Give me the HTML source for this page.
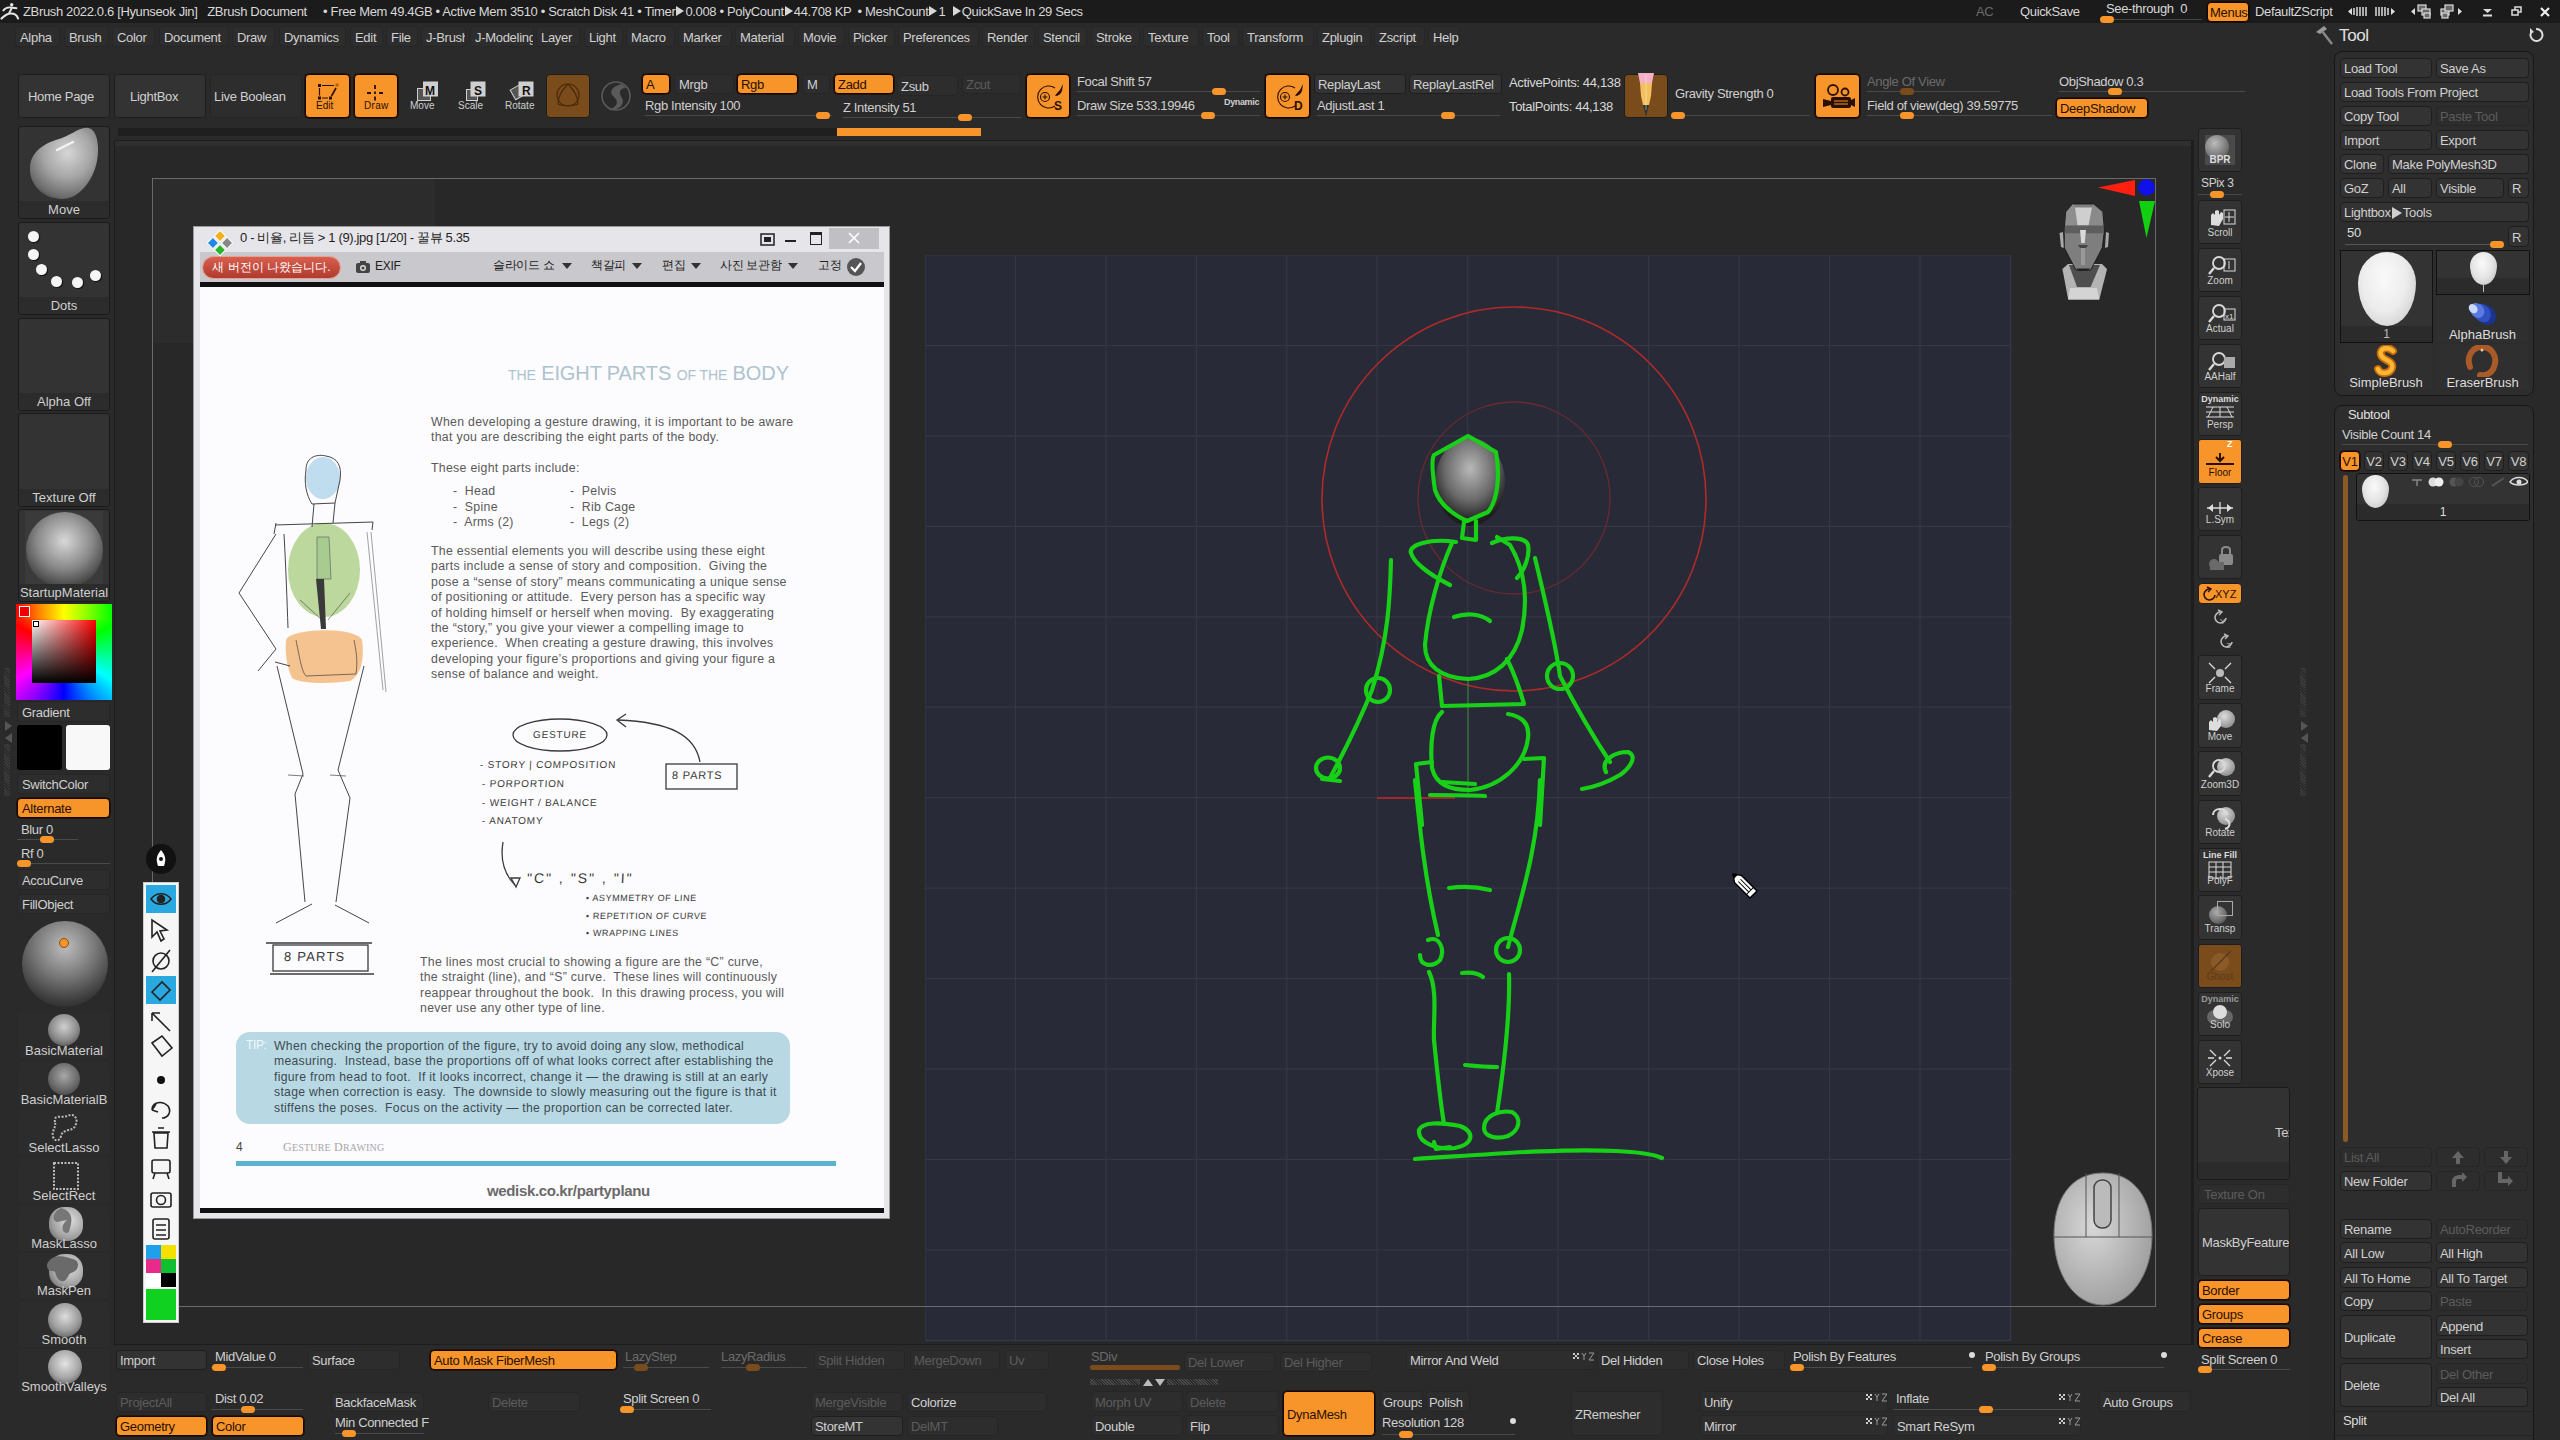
<!DOCTYPE html><html><head><meta charset="utf-8"><style>
html,body{margin:0;padding:0;width:2560px;height:1440px;overflow:hidden;background:#2a2a2a;font-family:"Liberation Sans",sans-serif;}
div{position:absolute;box-sizing:content-box;}
.t{white-space:nowrap;line-height:1.15;letter-spacing:-0.35px;}
.b{display:flex;align-items:center;white-space:nowrap;overflow:hidden;border-radius:4px;box-sizing:border-box;padding-top:1px;letter-spacing:-0.3px;}
svg{position:absolute;}
</style></head><body>
<div style="left:0px;top:0px;width:2560px;height:23px;background:#1b1b1b;"></div>
<div class="t" style="left:23px;top:5px;font-size:13px;color:#d8d8d8;">ZBrush 2022.0.6 [Hyunseok Jin]&nbsp;&nbsp; ZBrush Document &nbsp;&nbsp;&nbsp;&nbsp;&bull; Free Mem 49.4GB &bull; Active Mem 3510 &bull; Scratch Disk 41 &bull; Timer<span style="display:inline-block;width:0;height:0;border-left:8px solid #d8d8d8;border-top:5px solid transparent;border-bottom:5px solid transparent;margin:0 1px"></span>0.008 &bull; PolyCount<span style="display:inline-block;width:0;height:0;border-left:8px solid #d8d8d8;border-top:5px solid transparent;border-bottom:5px solid transparent;margin:0 1px"></span>44.708 KP &nbsp;&bull; MeshCount<span style="display:inline-block;width:0;height:0;border-left:8px solid #d8d8d8;border-top:5px solid transparent;border-bottom:5px solid transparent;margin:0 1px"></span>1 &nbsp;<span style="display:inline-block;width:0;height:0;border-left:8px solid #d8d8d8;border-top:5px solid transparent;border-bottom:5px solid transparent;margin:0 1px"></span>QuickSave In 29 Secs</div>
<div class="b" style="left:15px;top:26px;width:45px;height:21px;background:#2d2d2d;border:1px solid #262626;color:#d0d0d0;font-size:13px;justify-content:flex-start;padding-left:4px;">Alpha</div>
<div class="b" style="left:64px;top:26px;width:45px;height:21px;background:#2d2d2d;border:1px solid #262626;color:#d0d0d0;font-size:13px;justify-content:flex-start;padding-left:4px;">Brush</div>
<div class="b" style="left:112px;top:26px;width:43px;height:21px;background:#2d2d2d;border:1px solid #262626;color:#d0d0d0;font-size:13px;justify-content:flex-start;padding-left:4px;">Color</div>
<div class="b" style="left:159px;top:26px;width:70px;height:21px;background:#2d2d2d;border:1px solid #262626;color:#d0d0d0;font-size:13px;justify-content:flex-start;padding-left:4px;">Document</div>
<div class="b" style="left:232px;top:26px;width:43px;height:21px;background:#2d2d2d;border:1px solid #262626;color:#d0d0d0;font-size:13px;justify-content:flex-start;padding-left:4px;">Draw</div>
<div class="b" style="left:279px;top:26px;width:67px;height:21px;background:#2d2d2d;border:1px solid #262626;color:#d0d0d0;font-size:13px;justify-content:flex-start;padding-left:4px;">Dynamics</div>
<div class="b" style="left:350px;top:26px;width:33px;height:21px;background:#2d2d2d;border:1px solid #262626;color:#d0d0d0;font-size:13px;justify-content:flex-start;padding-left:4px;">Edit</div>
<div class="b" style="left:386px;top:26px;width:32px;height:21px;background:#2d2d2d;border:1px solid #262626;color:#d0d0d0;font-size:13px;justify-content:flex-start;padding-left:4px;">File</div>
<div class="b" style="left:421px;top:26px;width:45px;height:21px;background:#2d2d2d;border:1px solid #262626;color:#d0d0d0;font-size:13px;justify-content:flex-start;padding-left:4px;">J-Brush</div>
<div class="b" style="left:470px;top:26px;width:64px;height:21px;background:#2d2d2d;border:1px solid #262626;color:#d0d0d0;font-size:13px;justify-content:flex-start;padding-left:4px;">J-Modeling</div>
<div class="b" style="left:536px;top:26px;width:44px;height:21px;background:#2d2d2d;border:1px solid #262626;color:#d0d0d0;font-size:13px;justify-content:flex-start;padding-left:4px;">Layer</div>
<div class="b" style="left:584px;top:26px;width:39px;height:21px;background:#2d2d2d;border:1px solid #262626;color:#d0d0d0;font-size:13px;justify-content:flex-start;padding-left:4px;">Light</div>
<div class="b" style="left:626px;top:26px;width:49px;height:21px;background:#2d2d2d;border:1px solid #262626;color:#d0d0d0;font-size:13px;justify-content:flex-start;padding-left:4px;">Macro</div>
<div class="b" style="left:678px;top:26px;width:54px;height:21px;background:#2d2d2d;border:1px solid #262626;color:#d0d0d0;font-size:13px;justify-content:flex-start;padding-left:4px;">Marker</div>
<div class="b" style="left:735px;top:26px;width:60px;height:21px;background:#2d2d2d;border:1px solid #262626;color:#d0d0d0;font-size:13px;justify-content:flex-start;padding-left:4px;">Material</div>
<div class="b" style="left:798px;top:26px;width:47px;height:21px;background:#2d2d2d;border:1px solid #262626;color:#d0d0d0;font-size:13px;justify-content:flex-start;padding-left:4px;">Movie</div>
<div class="b" style="left:848px;top:26px;width:47px;height:21px;background:#2d2d2d;border:1px solid #262626;color:#d0d0d0;font-size:13px;justify-content:flex-start;padding-left:4px;">Picker</div>
<div class="b" style="left:898px;top:26px;width:81px;height:21px;background:#2d2d2d;border:1px solid #262626;color:#d0d0d0;font-size:13px;justify-content:flex-start;padding-left:4px;">Preferences</div>
<div class="b" style="left:982px;top:26px;width:53px;height:21px;background:#2d2d2d;border:1px solid #262626;color:#d0d0d0;font-size:13px;justify-content:flex-start;padding-left:4px;">Render</div>
<div class="b" style="left:1038px;top:26px;width:49px;height:21px;background:#2d2d2d;border:1px solid #262626;color:#d0d0d0;font-size:13px;justify-content:flex-start;padding-left:4px;">Stencil</div>
<div class="b" style="left:1091px;top:26px;width:49px;height:21px;background:#2d2d2d;border:1px solid #262626;color:#d0d0d0;font-size:13px;justify-content:flex-start;padding-left:4px;">Stroke</div>
<div class="b" style="left:1143px;top:26px;width:56px;height:21px;background:#2d2d2d;border:1px solid #262626;color:#d0d0d0;font-size:13px;justify-content:flex-start;padding-left:4px;">Texture</div>
<div class="b" style="left:1202px;top:26px;width:37px;height:21px;background:#2d2d2d;border:1px solid #262626;color:#d0d0d0;font-size:13px;justify-content:flex-start;padding-left:4px;">Tool</div>
<div class="b" style="left:1242px;top:26px;width:72px;height:21px;background:#2d2d2d;border:1px solid #262626;color:#d0d0d0;font-size:13px;justify-content:flex-start;padding-left:4px;">Transform</div>
<div class="b" style="left:1317px;top:26px;width:54px;height:21px;background:#2d2d2d;border:1px solid #262626;color:#d0d0d0;font-size:13px;justify-content:flex-start;padding-left:4px;">Zplugin</div>
<div class="b" style="left:1374px;top:26px;width:51px;height:21px;background:#2d2d2d;border:1px solid #262626;color:#d0d0d0;font-size:13px;justify-content:flex-start;padding-left:4px;">Zscript</div>
<div class="b" style="left:1428px;top:26px;width:32px;height:21px;background:#2d2d2d;border:1px solid #262626;color:#d0d0d0;font-size:13px;justify-content:flex-start;padding-left:4px;">Help</div>
<div class="t" style="left:1976px;top:5px;font-size:13px;color:#6a6a6a;">AC</div>
<div class="t" style="left:2020px;top:5px;font-size:13px;color:#d8d8d8;">QuickSave</div>
<div class="t" style="left:2106px;top:2px;font-size:13px;color:#d8d8d8;">See-through&nbsp; 0</div>
<div style="left:2100px;top:19px;width:102px;height:1px;background:#444;"></div>
<div style="left:2100px;top:16px;width:14px;height:7px;border-radius:4px;background:#f8952a"></div>
<div class="b" style="left:2207px;top:2px;width:42px;height:20px;background:#f8952a;border:1px solid #160600;color:#2a0f00;font-size:13px;justify-content:flex-start;padding-left:2px;box-shadow:0 0 0 0.6px #160600;">Menus</div>
<div class="t" style="left:2255px;top:5px;font-size:13px;color:#d8d8d8;">DefaultZScript</div>
<div class="b" style="left:18px;top:74px;width:92px;height:44px;background:#333333;border:1px solid #1e1e1e;color:#d0d0d0;font-size:13px;justify-content:flex-start;padding-left:9px;">Home Page</div>
<div class="b" style="left:114px;top:74px;width:92px;height:44px;background:#333333;border:1px solid #1e1e1e;color:#d0d0d0;font-size:13px;justify-content:flex-start;padding-left:15px;">LightBox</div>
<div class="b" style="left:210px;top:74px;width:92px;height:44px;background:#2d2d2d;border:1px solid #262626;color:#d0d0d0;font-size:13px;justify-content:flex-start;padding-left:3px;">Live Boolean</div>
<div class="b" style="left:305px;top:74px;width:45px;height:44px;background:#f8952a;border:1px solid #160600;color:#2a0f00;font-size:13px;justify-content:flex-start;padding-left:4px;box-shadow:0 0 0 0.6px #160600;"></div>
<div class="b" style="left:354px;top:74px;width:44px;height:44px;background:#f8952a;border:1px solid #160600;color:#2a0f00;font-size:13px;justify-content:flex-start;padding-left:4px;box-shadow:0 0 0 0.6px #160600;"></div>
<div class="t" style="left:316px;top:100px;font-size:10px;color:#2a0f00;letter-spacing:0;">Edit</div>
<div class="t" style="left:364px;top:100px;font-size:10px;color:#2a0f00;letter-spacing:0.3px;">Draw</div>
<div class="t" style="left:410px;top:100px;font-size:10px;color:#cfcfcf;letter-spacing:0;">Move</div>
<div class="t" style="left:458px;top:100px;font-size:10px;color:#cfcfcf;letter-spacing:0;">Scale</div>
<div class="t" style="left:505px;top:100px;font-size:10px;color:#cfcfcf;letter-spacing:0;">Rotate</div>
<div class="b" style="left:546px;top:74px;width:44px;height:44px;background:#333333;border:1px solid #1e1e1e;color:#d0d0d0;font-size:13px;justify-content:flex-start;padding-left:4px;background:#7a4c1c;border-color:#1e1e1e;"></div>
<div class="b" style="left:642px;top:74px;width:28px;height:20px;background:#f8952a;border:1px solid #160600;color:#2a0f00;font-size:13px;justify-content:flex-start;padding-left:3px;box-shadow:0 0 0 0.6px #160600;">A</div>
<div class="b" style="left:674px;top:74px;width:60px;height:20px;background:#2d2d2d;border:1px solid #262626;color:#d0d0d0;font-size:13px;justify-content:flex-start;padding-left:4px;">Mrgb</div>
<div class="b" style="left:737px;top:74px;width:61px;height:20px;background:#f8952a;border:1px solid #160600;color:#2a0f00;font-size:13px;justify-content:flex-start;padding-left:3px;box-shadow:0 0 0 0.6px #160600;">Rgb</div>
<div class="b" style="left:802px;top:74px;width:28px;height:20px;background:#2d2d2d;border:1px solid #262626;color:#d0d0d0;font-size:13px;justify-content:flex-start;padding-left:4px;">M</div>
<div class="b" style="left:834px;top:74px;width:60px;height:20px;background:#f8952a;border:1px solid #160600;color:#2a0f00;font-size:13px;justify-content:flex-start;padding-left:3px;box-shadow:0 0 0 0.6px #160600;">Zadd</div>
<div class="b" style="left:897px;top:75px;width:61px;height:21px;background:#2d2d2d;border:1px solid #262626;color:#d0d0d0;font-size:13px;justify-content:flex-start;padding-left:3px;">Zsub</div>
<div class="b" style="left:962px;top:74px;width:59px;height:20px;background:#2d2d2d;border:1px solid #262626;color:#5c5c5c;font-size:13px;justify-content:flex-start;padding-left:3px;">Zcut</div>
<div class="t" style="left:645px;top:99px;font-size:13px;color:#d0d0d0;">Rgb Intensity 100</div>
<div style="left:645px;top:115px;width:187px;height:1px;background:#4a4a4a;"></div>
<div style="left:816px;top:112px;width:14px;height:7px;border-radius:4px;background:#f8952a"></div>
<div class="t" style="left:843px;top:101px;font-size:13px;color:#d0d0d0;">Z Intensity 51</div>
<div style="left:843px;top:117px;width:178px;height:1px;background:#4a4a4a;"></div>
<div style="left:958px;top:114px;width:14px;height:7px;border-radius:4px;background:#f8952a"></div>
<div style="left:837px;top:128px;width:144px;height:8px;background:#f8952a;"></div>
<div class="b" style="left:1026px;top:74px;width:44px;height:44px;background:#f8952a;border:1px solid #160600;color:#2a0f00;font-size:13px;justify-content:flex-start;padding-left:4px;box-shadow:0 0 0 0.6px #160600;"></div>
<div class="t" style="left:1077px;top:75px;font-size:13px;color:#d0d0d0;">Focal Shift 57</div>
<div style="left:1077px;top:91px;width:183px;height:1px;background:#4a4a4a;"></div>
<div style="left:1212px;top:88px;width:14px;height:7px;border-radius:4px;background:#f8952a"></div>
<div class="t" style="left:1077px;top:99px;font-size:13px;color:#d0d0d0;">Draw Size 533.19946</div>
<div style="left:1077px;top:115px;width:183px;height:1px;background:#4a4a4a;"></div>
<div style="left:1201px;top:112px;width:14px;height:7px;border-radius:4px;background:#f8952a"></div>
<div class="t" style="left:1224px;top:97px;font-size:9px;color:#cfcfcf;font-weight:bold;">Dynamic</div>
<div class="b" style="left:1265px;top:74px;width:45px;height:44px;background:#f8952a;border:1px solid #160600;color:#2a0f00;font-size:13px;justify-content:flex-start;padding-left:4px;box-shadow:0 0 0 0.6px #160600;"></div>
<div class="b" style="left:1314px;top:74px;width:92px;height:20px;background:#333333;border:1px solid #1e1e1e;color:#d0d0d0;font-size:13px;justify-content:flex-start;padding-left:3px;">ReplayLast</div>
<div class="b" style="left:1409px;top:74px;width:93px;height:20px;background:#333333;border:1px solid #1e1e1e;color:#d0d0d0;font-size:13px;justify-content:flex-start;padding-left:3px;">ReplayLastRel</div>
<div class="t" style="left:1317px;top:99px;font-size:13px;color:#d0d0d0;">AdjustLast 1</div>
<div style="left:1317px;top:115px;width:183px;height:1px;background:#4a4a4a;"></div>
<div style="left:1441px;top:112px;width:14px;height:7px;border-radius:4px;background:#f8952a"></div>
<div class="t" style="left:1509px;top:76px;font-size:13px;color:#d8d8d8;">ActivePoints: 44,138</div>
<div class="t" style="left:1509px;top:100px;font-size:13px;color:#d8d8d8;">TotalPoints: 44,138</div>
<div class="b" style="left:1624px;top:74px;width:44px;height:44px;background:#333333;border:1px solid #1e1e1e;color:#d0d0d0;font-size:13px;justify-content:flex-start;padding-left:4px;background:#7a4c1c;"></div>
<div class="t" style="left:1675px;top:87px;font-size:13px;color:#d0d0d0;">Gravity Strength 0</div>
<div style="left:1671px;top:115px;width:139px;height:1px;background:#4a4a4a;"></div>
<div style="left:1671px;top:112px;width:14px;height:7px;border-radius:4px;background:#f8952a"></div>
<div class="b" style="left:1815px;top:74px;width:45px;height:44px;background:#f8952a;border:1px solid #160600;color:#2a0f00;font-size:13px;justify-content:flex-start;padding-left:4px;box-shadow:0 0 0 0.6px #160600;"></div>
<div class="t" style="left:1867px;top:75px;font-size:13px;color:#6a6a6a;">Angle Of View</div>
<div style="left:1867px;top:91px;width:133px;height:1px;background:#4a4a4a;"></div>
<div style="left:1900px;top:88px;width:14px;height:7px;border-radius:4px;background:#7a4c1c"></div>
<div class="t" style="left:1867px;top:99px;font-size:13px;color:#d0d0d0;">Field of view(deg) 39.59775</div>
<div style="left:1867px;top:115px;width:185px;height:1px;background:#4a4a4a;"></div>
<div style="left:1900px;top:112px;width:14px;height:7px;border-radius:4px;background:#f8952a"></div>
<div class="t" style="left:2059px;top:75px;font-size:13px;color:#d0d0d0;">ObjShadow 0.3</div>
<div style="left:2059px;top:91px;width:186px;height:1px;background:#4a4a4a;"></div>
<div style="left:2108px;top:88px;width:14px;height:7px;border-radius:4px;background:#f8952a"></div>
<div class="b" style="left:2056px;top:98px;width:92px;height:20px;background:#f8952a;border:1px solid #160600;color:#2a0f00;font-size:13px;justify-content:flex-start;padding-left:3px;box-shadow:0 0 0 0.6px #160600;">DeepShadow</div>
<svg style="left:0;top:0" width="2560" height="140"><g fill="#2a0f00"><rect x="318" y="84" width="3" height="3"/><rect x="318" y="96.5" width="3" height="3"/><rect x="329" y="96.5" width="3" height="3"/></g><rect x="335.5" y="83.5" width="3" height="3" fill="#b06010"/><g stroke="#2a0f00" stroke-width="1.2" fill="none"><path d="M322 85.5 L334 85.5 M319.5 88 L319.5 95.5 M322 98 L328 98"/><path d="M336 88 L331.5 96" stroke-width="1.6"/></g><g stroke="#2a0f00" stroke-width="1.8"><path d="M375 85 L375 89 M375 91.5 L375 94 M375 96.5 L375 100.5 M367 93 L371 93 M379 93 L383 93"/></g><g stroke="#cfcfcf" stroke-width="1"><rect x="417.5" y="88.5" width="13" height="12" fill="#555"/><rect x="423.5" y="82" width="14" height="14" fill="#cfcfcf"/><rect x="466.5" y="89.5" width="11" height="11" fill="#555"/><rect x="471" y="82" width="14" height="14" fill="#cfcfcf"/><rect x="512" y="87" width="11" height="11" fill="#555" transform="rotate(-30 517 92)"/><rect x="519" y="82" width="14" height="14" fill="#cfcfcf"/></g><g font-family="Liberation Sans" font-weight="bold" font-size="12" fill="#111"><text x="425" y="94.5">M</text><text x="474" y="94.5">S</text><text x="522" y="94.5">R</text></g><g fill="none" stroke="#4a2a08" stroke-width="1.1"><circle cx="568" cy="95" r="11"/><path d="M568 84 C560 92,558 100,558 104 C562 106,574 106,578 104 C578 100,576 92,568 84Z"/></g><circle cx="616" cy="96" r="14" fill="none" stroke="#5a5a5a" stroke-width="1.6"/><path d="M622 84 C612 86,608 92,614 97 C620 102,616 108,608 110 C616 111,626 106,622 98 C618 92,620 88,626 88Z" fill="#5a5a5a"/><g fill="none" stroke="#2a0f00" stroke-width="1.1"><path d="M1055 88 A11 11 0 1 0 1055 106"/><circle cx="1045" cy="97" r="4.5"/><path d="M1045 94.5 L1045 99.5 M1042.5 97 L1047.5 97"/><path d="M1295 88 A11 11 0 1 0 1295 106"/><circle cx="1285" cy="97" r="4.5"/><path d="M1285 94.5 L1285 99.5 M1282.5 97 L1287.5 97"/></g><g fill="#2a0f00"><path d="M1063 84 L1060 90 C1058 92,1056 94,1055 96 C1058 96,1061 94,1062 91Z"/><path d="M1303 84 L1300 90 C1298 92,1296 94,1295 96 C1298 96,1301 94,1302 91Z"/></g><g font-family="Liberation Sans" font-weight="bold" font-size="12" fill="#2a0f00"><text x="1054" y="109.5">S</text><text x="1294" y="109.5">D</text></g><path d="M1638 73 L1654 73 L1652 83 L1640 83Z" fill="#f4b0c8"/><path d="M1640 83 L1652 83 L1651 96 L1649 105 L1643 105 L1641 96Z" fill="#f3c060"/><path d="M1643 105 L1649 105 L1646 117Z" fill="#333"/><path d="M1646 75 L1646 110" stroke="#fff5d0" stroke-width="0.8" opacity="0.6"/><g fill="none" stroke="#2a0f00" stroke-width="1.8"><circle cx="1833" cy="90" r="5"/><circle cx="1845" cy="92" r="3.5"/></g><rect x="1831" y="97" width="20" height="11" rx="2" fill="#2a0f00"/><path d="M1834 101 L1848 101 M1834 104 L1848 104" stroke="#f7952b" stroke-width="1"/><path d="M1823 99 L1831 101 L1831 105 L1823 107Z" fill="#2a0f00"/><path d="M1851 100 L1855 98 L1855 107 L1851 105Z" fill="#2a0f00"/></svg>
<svg style="left:0;top:0" width="2560" height="24"><g fill="none" stroke="#e4e4e4" stroke-width="1.9" stroke-linecap="round"><path d="M3.3 10.5 C5 8,8 7,11 7.5 C13 8,15 8,16.5 8.2"/><path d="M11.5 8.5 L9 13.5"/><path d="M1.5 18.5 C5 15,8 13.5,11 13.5 C14 13.5,17 15,18 18.5" stroke-width="2.2"/></g><circle cx="11.7" cy="4.8" r="1.7" fill="#e4e4e4"/><path d="M2348 11.5 L2352 8 L2352 15Z M2395 11.5 L2391 8 L2391 15Z M2411 11.5 L2415 8 L2415 15Z M2462 11.5 L2458 8 L2458 15Z" fill="#ddd"/><g stroke="#ddd" stroke-width="1.5"><path d="M2354 8 L2354 15 M2357 7 L2357 16 M2360 7 L2360 16 M2363 7 L2363 16 M2366 7 L2366 16"/><path d="M2376 7 L2376 16 M2379 7 L2379 16 M2382 7 L2382 16 M2385 7 L2385 16 M2388 8 L2388 15"/></g><g stroke="#ddd" stroke-width="1.2" fill="#6a6a6a"><rect x="2418" y="5" width="8" height="6"/><rect x="2422" y="9" width="8" height="6"/><rect x="2424" y="13" width="6" height="5"/><rect x="2441" y="9" width="8" height="6"/><rect x="2445" y="5" width="8" height="6"/><rect x="2442" y="13" width="6" height="5"/></g><path d="M2483 9 L2492 9 L2487.5 13Z" fill="#ddd"/><rect x="2483" y="14.5" width="9" height="2" fill="#ddd"/><g fill="none" stroke="#ddd" stroke-width="1.5"><rect x="2512" y="10" width="6" height="5"/><path d="M2515 10 L2515 7 L2521 7 L2521 12 L2518 12"/></g><path d="M2541 8 L2549 16 M2549 8 L2541 16" stroke="#eee" stroke-width="2.2"/></svg>
<div style="left:118px;top:128px;width:719px;height:8px;background:#1f1f1f;"></div>
<div style="left:18px;top:126px;width:90px;height:91px;background:#333;border:1px solid #1a1a1a;border-radius:3px;overflow:hidden"><svg style="left:0;top:0" width="90" height="76"><defs><radialGradient id="mv" cx="55%" cy="35%" r="70%"><stop offset="0" stop-color="#d6d6d6"/><stop offset="0.5" stop-color="#a6a6a6"/><stop offset="0.9" stop-color="#6a6a6a"/><stop offset="1" stop-color="#4a4a4a"/></radialGradient></defs><path d="M66 1 C78 -1,81 18,78 34 C74 54,60 72,43 72 C24 72,10 58,11 40 C12 24,26 16,40 12 C52 8,58 2,66 1Z" fill="url(#mv)"/><path d="M38 23 L54 15" stroke="#f4f4f4" stroke-width="2.2" stroke-linecap="round"/></svg><div style="left:0;bottom:0;width:90px;height:17px;background:#2c2c2c;color:#cfcfcf;font-size:13px;text-align:center;line-height:17px">Move</div></div>
<div style="left:18px;top:222px;width:90px;height:91px;background:#333;border:1px solid #1a1a1a;border-radius:3px;overflow:hidden"><div style="left:8.5px;top:8px;width:11px;height:11px;border-radius:50%;background:#f5f5f5;box-shadow:1px 1px 1px #111"></div><div style="left:8.5px;top:25.5px;width:11px;height:11px;border-radius:50%;background:#f5f5f5;box-shadow:1px 1px 1px #111"></div><div style="left:17px;top:40.5px;width:11px;height:11px;border-radius:50%;background:#f5f5f5;box-shadow:1px 1px 1px #111"></div><div style="left:31.5px;top:52.5px;width:11px;height:11px;border-radius:50%;background:#f5f5f5;box-shadow:1px 1px 1px #111"></div><div style="left:52.5px;top:54px;width:11px;height:11px;border-radius:50%;background:#f5f5f5;box-shadow:1px 1px 1px #111"></div><div style="left:70.5px;top:46.5px;width:11px;height:11px;border-radius:50%;background:#f5f5f5;box-shadow:1px 1px 1px #111"></div><div style="left:0;bottom:0;width:90px;height:17px;background:#2c2c2c;color:#cfcfcf;font-size:13px;text-align:center;line-height:17px">Dots</div></div>
<div style="left:18px;top:318px;width:90px;height:91px;background:#333;border:1px solid #1a1a1a;border-radius:3px;overflow:hidden"><div style="left:0;bottom:0;width:90px;height:17px;background:#2c2c2c;color:#cfcfcf;font-size:13px;text-align:center;line-height:17px">Alpha Off</div></div>
<div style="left:18px;top:413px;width:90px;height:92px;background:#333;border:1px solid #1a1a1a;border-radius:3px;overflow:hidden"><div style="left:0;bottom:0;width:90px;height:17px;background:#2c2c2c;color:#cfcfcf;font-size:13px;text-align:center;line-height:17px">Texture Off</div></div>
<div style="left:18px;top:509px;width:90px;height:91px;background:#333;border:1px solid #1a1a1a;border-radius:3px;overflow:hidden"><div style="left:6px;top:1px;width:78px;height:74px;background:#3a3a3a"></div><div style="left:7px;top:2px;width:77px;height:76px;border-radius:50%;background:radial-gradient(circle at 50% 38%,#d8d8d8,#8a8a8a 45%,#3a3a3a 80%,#222 100%)"></div><div style="left:0;bottom:0;width:90px;height:17px;background:#2c2c2c;color:#cfcfcf;font-size:13px;text-align:center;line-height:17px">StartupMaterial</div></div>
<div style="left:16px;top:604px;width:96px;height:96px;background:conic-gradient(from 0deg, #ff0 0deg,#0f0 60deg,#0ff 120deg,#00f 180deg,#f0f 240deg,#f00 300deg,#ff0 360deg)"></div>
<div style="left:16px;top:604px;width:96px;height:96px;background:linear-gradient(90deg,#f00 0%,#f80 25%,#ff0 50%,#8f0 75%,#0f0 100%);clip-path:polygon(0 0,100% 0,100% 16%,0 16%)"></div>
<div style="left:32px;top:620px;width:64px;height:63px;background:linear-gradient(to bottom,rgba(0,0,0,0),#000),linear-gradient(to right,#fff,#f00)"></div>
<div style="left:19px;top:606px;width:9px;height:9px;border:1px solid #fff;background:#e00"></div>
<div style="left:33px;top:621px;width:4px;height:4px;border:1px solid #000;background:#fff"></div>
<div class="b" style="left:17px;top:701px;width:93px;height:21px;background:#2d2d2d;border:1px solid #262626;color:#d0d0d0;font-size:13px;justify-content:flex-start;padding-left:4px;">Gradient</div>
<div style="left:17px;top:725px;width:45px;height:45px;background:#000;border-radius:3px;"></div>
<div style="left:66px;top:725px;width:44px;height:45px;background:#f8f8f8;border-radius:3px;"></div>
<div class="b" style="left:17px;top:774px;width:93px;height:20px;background:#2d2d2d;border:1px solid #262626;color:#d0d0d0;font-size:13px;justify-content:flex-start;padding-left:4px;">SwitchColor</div>
<div class="b" style="left:17px;top:798px;width:93px;height:20px;background:#f8952a;border:1px solid #160600;color:#2a0f00;font-size:13px;justify-content:flex-start;padding-left:4px;box-shadow:0 0 0 0.6px #160600;">Alternate</div>
<div class="t" style="left:21px;top:823px;font-size:13px;color:#d0d0d0;">Blur 0</div>
<div style="left:17px;top:839px;width:61px;height:1px;background:#4a4a4a;"></div>
<div style="left:40px;top:836px;width:14px;height:7px;border-radius:4px;background:#f8952a"></div>
<div class="t" style="left:21px;top:847px;font-size:13px;color:#d0d0d0;">Rf 0</div>
<div style="left:17px;top:863px;width:93px;height:1px;background:#4a4a4a;"></div>
<div style="left:17px;top:860px;width:14px;height:7px;border-radius:4px;background:#f8952a"></div>
<div class="b" style="left:17px;top:869px;width:93px;height:21px;background:#2d2d2d;border:1px solid #262626;color:#d0d0d0;font-size:13px;justify-content:flex-start;padding-left:4px;">AccuCurve</div>
<div class="b" style="left:17px;top:894px;width:93px;height:20px;background:#2d2d2d;border:1px solid #262626;color:#d0d0d0;font-size:13px;justify-content:flex-start;padding-left:4px;">FillObject</div>
<div style="left:22px;top:921px;width:86px;height:86px;border-radius:50%;background:radial-gradient(circle at 50% 30%,#bdbdbd,#7a7a7a 40%,#3a3a3a 75%,#1e1e1e 100%)"></div>
<div style="left:59px;top:938px;width:8px;height:8px;border-radius:50%;background:#f8952a;border:1px solid #8a4a10"></div>
<div style="left:4px;top:668px;width:6px;height:49px;background:repeating-linear-gradient(45deg,#3c3c3c 0 1px,#2a2a2a 1px 2px)"></div>
<div style="left:4px;top:744px;width:6px;height:52px;background:repeating-linear-gradient(45deg,#3c3c3c 0 1px,#2a2a2a 1px 2px)"></div>
<svg style="left:3px;top:720px" width="10" height="24"><path d="M2 1 L9 6 L2 11Z" fill="#555"/><path d="M9 13 L2 18 L9 23Z" fill="#555"/></svg>
<div style="left:19px;top:1013px;width:90px;height:45px;background:#2c2c2c;border-radius:3px"><div style="left:29px;top:1px;width:32px;height:32px;border-radius:50%;background:radial-gradient(circle at 50% 40%,#d0d0d0,#8a8a8a 55%,#333 100%)"></div><div style="left:0;top:29px;width:90px;color:#cfcfcf;font-size:13px;text-align:center;line-height:17px">BasicMaterial</div></div>
<div style="left:19px;top:1062px;width:90px;height:45px;background:#2c2c2c;border-radius:3px"><div style="left:29px;top:1px;width:32px;height:32px;border-radius:50%;background:radial-gradient(circle at 50% 40%,#a8a8a8,#6a6a6a 55%,#333 100%)"></div><div style="left:0;top:29px;width:90px;color:#cfcfcf;font-size:13px;text-align:center;line-height:17px">BasicMaterialB</div></div>
<div style="left:19px;top:1110px;width:90px;height:45px;background:#2c2c2c;border-radius:3px"><svg style="left:30px;top:2px" width="32" height="32"><path d="M6 10 C4 2,14 6,18 4 C26 0,30 8,26 14 C24 20,14 16,12 24 C10 32,2 28,4 20 C5 16,7 14,6 10Z" fill="none" stroke="#bbb" stroke-width="2" stroke-dasharray="2 1.5"/></svg><div style="left:0;top:29px;width:90px;color:#cfcfcf;font-size:13px;text-align:center;line-height:17px">SelectLasso</div></div>
<div style="left:19px;top:1158px;width:90px;height:45px;background:#2c2c2c;border-radius:3px"><svg style="left:30px;top:2px" width="32" height="32"><rect x="5" y="3" width="24" height="26" fill="none" stroke="#bbb" stroke-width="2" stroke-dasharray="2 1.5"/></svg><div style="left:0;top:29px;width:90px;color:#cfcfcf;font-size:13px;text-align:center;line-height:17px">SelectRect</div></div>
<div style="left:19px;top:1206px;width:90px;height:45px;background:#2c2c2c;border-radius:3px"><div style="left:30px;top:1px;width:34px;height:34px;border-radius:45%;background:radial-gradient(circle at 60% 40%,#e0e0e0,#a0a0a0 60%,#555 100%)"></div><svg style="left:28px;top:0px" width="36" height="36"><path d="M14 2 C6 6,4 14,10 16 L20 14 C12 20,16 30,22 26 L24 18 C26 10,22 4,14 2Z" fill="#777"/></svg><div style="left:0;top:29px;width:90px;color:#cfcfcf;font-size:13px;text-align:center;line-height:17px">MaskLasso</div></div>
<div style="left:19px;top:1253px;width:90px;height:45px;background:#2c2c2c;border-radius:3px"><div style="left:30px;top:1px;width:34px;height:34px;border-radius:45%;background:radial-gradient(circle at 60% 40%,#e0e0e0,#a0a0a0 60%,#555 100%)"></div><svg style="left:26px;top:0px" width="40" height="36"><path d="M4 8 C10 0,22 4,28 6 C36 8,34 18,26 20 C22 22,22 30,16 28 C10 26,12 18,8 18 C2 18,0 12,4 8Z" fill="#6a6a6a"/></svg><div style="left:0;top:29px;width:90px;color:#cfcfcf;font-size:13px;text-align:center;line-height:17px">MaskPen</div></div>
<div style="left:19px;top:1302px;width:90px;height:45px;background:#2c2c2c;border-radius:3px"><div style="left:29px;top:1px;width:34px;height:34px;border-radius:50%;background:radial-gradient(circle at 50% 40%,#ddd,#999 55%,#444 100%)"></div><div style="left:0;top:29px;width:90px;color:#cfcfcf;font-size:13px;text-align:center;line-height:17px">Smooth</div></div>
<div style="left:19px;top:1349px;width:90px;height:45px;background:#2c2c2c;border-radius:3px"><div style="left:29px;top:1px;width:34px;height:34px;border-radius:50%;background:radial-gradient(circle at 50% 40%,#e4e4e4,#a4a4a4 55%,#444 100%)"></div><div style="left:0;top:29px;width:90px;color:#cfcfcf;font-size:13px;text-align:center;line-height:17px">SmoothValleys</div></div>
<div style="left:114px;top:140px;width:2078px;height:1205px;background:#282828;box-shadow:inset 0 0 0 1px #1d1d1d;"></div>
<div style="left:115px;top:141px;width:2076px;height:5px;background:#2f2f2f;"></div>
<div style="left:153px;top:179px;width:282px;height:164px;background:#2c2c2c;"></div>
<svg style="left:925px;top:255px" width="1087" height="1087"><rect x="0" y="0" width="1087" height="1087" fill="#282a37"/><g stroke="#343746" stroke-width="1.2"><line x1="0.0" y1="0" x2="0.0" y2="1086" /><line x1="0" y1="0.0" x2="1086" y2="0.0" /><line x1="90.5" y1="0" x2="90.5" y2="1086" /><line x1="0" y1="90.5" x2="1086" y2="90.5" /><line x1="180.9" y1="0" x2="180.9" y2="1086" /><line x1="0" y1="180.9" x2="1086" y2="180.9" /><line x1="271.4" y1="0" x2="271.4" y2="1086" /><line x1="0" y1="271.4" x2="1086" y2="271.4" /><line x1="361.8" y1="0" x2="361.8" y2="1086" /><line x1="0" y1="361.8" x2="1086" y2="361.8" /><line x1="452.2" y1="0" x2="452.2" y2="1086" /><line x1="0" y1="452.2" x2="1086" y2="452.2" /><line x1="542.7" y1="0" x2="542.7" y2="1086" /><line x1="0" y1="542.7" x2="1086" y2="542.7" /><line x1="633.1" y1="0" x2="633.1" y2="1086" /><line x1="0" y1="633.1" x2="1086" y2="633.1" /><line x1="723.6" y1="0" x2="723.6" y2="1086" /><line x1="0" y1="723.6" x2="1086" y2="723.6" /><line x1="814.1" y1="0" x2="814.1" y2="1086" /><line x1="0" y1="814.1" x2="1086" y2="814.1" /><line x1="904.5" y1="0" x2="904.5" y2="1086" /><line x1="0" y1="904.5" x2="1086" y2="904.5" /><line x1="995.0" y1="0" x2="995.0" y2="1086" /><line x1="0" y1="995.0" x2="1086" y2="995.0" /><line x1="1085.4" y1="0" x2="1085.4" y2="1086" /><line x1="0" y1="1085.4" x2="1086" y2="1085.4" /></g></svg>
<div style="left:152px;top:178px;width:2002px;height:1127px;border:1px solid #6a6a6a;background:transparent"></div>
<svg style="left:0;top:0" width="2560" height="1440">
<circle cx="1514" cy="499" r="192" fill="none" stroke="#b02a2a" stroke-width="1.6"/>
<circle cx="1514" cy="498" r="96" fill="none" stroke="#6a2a30" stroke-width="1.3"/>
<line x1="1377" y1="798" x2="1455" y2="798" stroke="#c02a2a" stroke-width="1.3"/>
<line x1="1468" y1="680" x2="1468" y2="795" stroke="#3a8a3a" stroke-width="1"/>
<defs><radialGradient id="hg" cx="50%" cy="35%" r="60%"><stop offset="0" stop-color="#b8b8b8"/><stop offset="0.6" stop-color="#6a6a6a"/><stop offset="1" stop-color="#1e1e1e"/></radialGradient></defs>
<ellipse cx="1470" cy="482" rx="35" ry="44" fill="url(#hg)"/>
<g fill="none" stroke="#18d018" stroke-width="4.2" stroke-linecap="round" stroke-linejoin="round">
<path d="M1468 436 L1496 452 C1500 475,1498 500,1488 512 L1467 521 C1452 514,1440 505,1435 490 C1432 470,1432 458,1434 455 Z"/>
<path d="M1464 522 L1462 538 L1476 540 L1476 521"/>
<path d="M1452 543 C1440 570,1428 610,1425 645 C1425 665,1440 678,1468 679 C1495 678,1515 660,1522 630 C1528 600,1525 570,1510 545 L1497 537"/>
<path d="M1456 542 C1430 538,1408 545,1411 553 C1414 563,1430 575,1450 585"/>
<path d="M1492 543 C1505 537,1525 536,1528 545 C1530 555,1525 570,1517 578"/>
<path d="M1454 617 C1465 613,1480 613,1490 621"/>
<path d="M1391 560 C1390 600,1388 640,1372 690 C1360 720,1345 750,1330 778"/>
<circle cx="1378" cy="690" r="12"/>
<ellipse cx="1328" cy="768" rx="12" ry="10.5"/><path d="M1322 779 L1340 781"/>
<path d="M1535 558 C1545 600,1555 640,1560 676 C1575 705,1592 735,1610 762"/>
<circle cx="1560" cy="676" r="13"/>
<path d="M1606 772 C1600 760,1615 752,1628 752 C1638 756,1630 768,1620 775 C1608 782,1595 787,1582 789"/>
<path d="M1439 676 L1442 706 L1524 704 C1520 690,1515 675,1507 659"/>
<path d="M1442 712 C1432 720,1430 745,1432 768 C1436 785,1450 790,1470 790 C1500 787,1525 765,1528 738 C1530 722,1520 716,1508 714"/>
<path d="M1432 762 L1416 764 L1422 825"/>
<path d="M1524 759 L1544 758 L1540 825"/>
<path d="M1442 782 L1475 784"/>
<path d="M1430 795 C1450 795,1470 795,1485 796"/>
<path d="M1415 780 C1420 830,1425 880,1438 935"/>
<path d="M1428 940 C1440 935,1445 950,1440 960 C1432 968,1420 966,1420 955"/>
<path d="M1429 972 C1438 990,1433 1020,1434 1040 C1437 1070,1440 1100,1444 1124"/>
<path d="M1419 1130 C1422 1122,1440 1122,1460 1126 C1475 1132,1474 1144,1455 1148 C1435 1150,1420 1142,1419 1133 Z"/>
<path d="M1434 1142 L1436 1149 L1450 1147"/>
<path d="M1540 780 C1538 850,1520 900,1508 947"/>
<circle cx="1508" cy="950" r="12"/>
<path d="M1509 974 C1510 1010,1505 1060,1497 1113"/>
<path d="M1484 1128 C1484 1115,1500 1110,1512 1112 C1522 1118,1520 1130,1508 1136 C1495 1140,1484 1136,1484 1128 Z"/>
<path d="M1449 888 C1462 886,1478 887,1490 890"/>
<path d="M1462 973 C1470 972,1478 973,1483 977"/>
<path d="M1465 1065 C1475 1066,1486 1067,1497 1067"/>
<path d="M1415 1159 C1480 1155,1560 1148,1616 1151 C1640 1152,1655 1155,1662 1158"/>
</g>
</svg>
<svg style="left:2040px;top:170px" width="130" height="140"><path d="M22.4 99 L28 94 L62 94 L67 99 L59.3 129.4 L28.2 129.4Z" fill="#b4b4b4"/><path d="M30 118 L57 118 L59.3 129.4 L28.2 129.4Z" fill="#d4d4d4"/><path d="M29 95 L60 95 L50.6 117 L37 117Z" fill="#4e4e4e"/><path d="M19.5 63 L23 62 L24 78 L21 77Z M69 63 L66 62 L65 78 L68 77Z" fill="#a8a8a8"/><path d="M26.3 41.8 L33 34 L53 34 L62.3 41.8 L64.2 62.3 L62.3 77.8 L50.6 100.2 L36 100.2 L24.3 77.8 L24.3 62.3Z" fill="#7e7e7e" stroke="#111" stroke-width="0.8"/><path d="M26.3 41.8 L33 34 L35 37.5 L37.5 55.4 L25 56Z" fill="#8e8e8e"/><path d="M62.3 41.8 L53 34 L52 37.5 L48.6 55.4 L63.5 56Z" fill="#8a8a8a"/><path d="M35 37.5 L52 37.5 L48.6 55.4 L37.5 55.4Z" fill="#cfcfcf"/><path d="M24.8 55.4 L63.6 55.4 L64 63.2 L24.5 63.2Z" fill="#5e5e5e"/><path d="M40 60 L46 60 L44.7 73 L41.3 73Z" fill="#dadada"/><path d="M38 75 L48 75 L46 78 L40 78Z" fill="#444"/><path d="M41 78 L45 78 L45 95 L41 95Z" fill="#999"/><path d="M36 98.5 L50.6 98.5 L47 101 L39 101Z" fill="#222"/><path d="M58 17.5 L95 10 L95 26Z" fill="#ff2010"/><circle cx="106.5" cy="17.5" r="8.3" fill="#1010e8"/><path d="M99 31 L115 31 L106.5 68Z" fill="#10d010"/></svg>
<svg style="left:2050px;top:1170px" width="106" height="140"><defs><radialGradient id="mg" cx="40%" cy="40%" r="70%"><stop offset="0" stop-color="#d8d8d8"/><stop offset="1" stop-color="#9a9a9a"/></radialGradient></defs><path d="M53 3 C85 3,102 30,102 65 C102 105,80 135,53 135 C25 135,4 105,4 65 C4 30,20 3,53 3Z" fill="url(#mg)" stroke="#777"/><line x1="4" y1="67" x2="102" y2="67" stroke="#555"/><line x1="36" y1="3" x2="36" y2="67" stroke="#555"/><line x1="69" y1="3" x2="69" y2="67" stroke="#555"/><rect x="44" y="10" width="17" height="48" rx="8" fill="#bbb" stroke="#444" stroke-width="1.5"/></svg>
<svg style="left:0;top:0" width="2560" height="1440"><g transform="translate(1733,874) rotate(45)"><path d="M0 0 L7 -5 L29 -5 L29 5 L7 5Z" fill="#fff" stroke="#000" stroke-width="1.4"/><path d="M9 -1.6 L24 -1.6 M9 1.6 L24 1.6 M24 -5 L24 5" stroke="#000" stroke-width="1"/><path d="M0 0 L4 -3 L4 3Z" fill="#000"/></g></svg>
<div style="left:194px;top:227px;width:695px;height:991px;background:#e6e6ea;box-shadow:0 0 0 1px #9a9a9a;"></div>
<div style="left:200px;top:252px;width:684px;height:30px;background:#c9c9cd;"></div>
<div style="left:200px;top:282px;width:684px;height:5px;background:#111;"></div>
<div style="left:200px;top:287px;width:684px;height:921px;background:#fcfbfd;"></div>
<div style="left:200px;top:1208px;width:684px;height:5px;background:#111;"></div>
<svg style="left:205px;top:230px" width="30" height="26"><g transform="rotate(45 15 13)"><rect x="6" y="4" width="8" height="8" fill="#f0b020" stroke="#fff"/><rect x="16" y="4" width="8" height="8" fill="#888" stroke="#fff"/><rect x="6" y="14" width="8" height="8" fill="#1e88e5" stroke="#fff"/><rect x="16" y="14" width="8" height="8" fill="#2cb52c" stroke="#fff"/></g></svg>
<div class="t" style="left:240px;top:231px;font-size:13px;color:#1e1e1e;">0 - 비율, 리듬 &gt; 1 (9).jpg [1/20] - 꿀뷰 5.35</div>
<svg style="left:758px;top:231px" width="20" height="16"><rect x="3" y="3" width="13" height="11" fill="none" stroke="#222" stroke-width="1.5"/><rect x="6" y="6" width="7" height="5" fill="#222"/></svg>
<div style="left:785px;top:240px;width:11px;height:2px;background:#222;"></div>
<div style="left:810px;top:232px;width:10px;height:9px;border:1.5px solid #222;border-top-width:3px"></div>
<div style="left:829px;top:228px;width:50px;height:21px;background:#c0c0c4;"></div>
<svg style="left:845px;top:230px" width="18" height="18"><path d="M4 3 L14 13 M14 3 L4 13" stroke="#fff" stroke-width="1.6"/></svg>
<div style="left:203px;top:257px;width:137px;height:21px;border-radius:11px;background:linear-gradient(#d86050,#b03a2e);box-shadow:0 0 0 1px #e8a090;color:#fff;font-size:12px;line-height:21px;text-align:center">새 버전이 나왔습니다.</div>
<svg style="left:355px;top:259px" width="16" height="16"><rect x="1" y="4" width="14" height="10" rx="2" fill="#444"/><rect x="5" y="2" width="6" height="3" fill="#444"/><circle cx="8" cy="9" r="3" fill="#ddd"/><circle cx="8" cy="9" r="1.6" fill="#444"/></svg>
<div class="t" style="left:375px;top:260px;font-size:12px;color:#222;letter-spacing:-0.3px;">EXIF</div>
<div class="t" style="left:493px;top:259px;font-size:12px;color:#222;">슬라이드 쇼</div>
<div class="t" style="left:591px;top:259px;font-size:12px;color:#222;">책갈피</div>
<div class="t" style="left:662px;top:259px;font-size:12px;color:#222;">편집</div>
<div class="t" style="left:720px;top:259px;font-size:12px;color:#222;">사진 보관함</div>
<div class="t" style="left:818px;top:259px;font-size:12px;color:#222;">고정</div>
<svg style="left:562px;top:263px" width="11" height="8"><path d="M0 0 L10 0 L5 6Z" fill="#333"/></svg>
<svg style="left:632px;top:263px" width="11" height="8"><path d="M0 0 L10 0 L5 6Z" fill="#333"/></svg>
<svg style="left:691px;top:263px" width="11" height="8"><path d="M0 0 L10 0 L5 6Z" fill="#333"/></svg>
<svg style="left:788px;top:263px" width="11" height="8"><path d="M0 0 L10 0 L5 6Z" fill="#333"/></svg>
<svg style="left:846px;top:257px" width="20" height="20"><circle cx="10" cy="10" r="9" fill="#555"/><path d="M5 10 L9 14 L15 6" stroke="#fff" stroke-width="2.2" fill="none"/></svg>
<div class="t" style="left:508px;top:362px;color:#adc3cf;font-size:20px;letter-spacing:-0.1px"><span style="font-size:14px">THE</span> EIGHT PARTS <span style="font-size:14px">OF THE</span> BODY</div>
<div class="t" style="left:431px;top:415.0px;font-size:12.3px;color:#5a5a5a;letter-spacing:0.3px;">When developing a gesture drawing, it is important to be aware</div>
<div class="t" style="left:431px;top:430.4px;font-size:12.3px;color:#5a5a5a;letter-spacing:0.3px;">that you are describing the eight parts of the body.</div>
<div class="t" style="left:431px;top:461.0px;font-size:12.3px;color:#5a5a5a;letter-spacing:0.3px;">These eight parts include:</div>
<div class="t" style="left:453px;top:484.0px;font-size:12.3px;color:#5a5a5a;letter-spacing:0.3px;">-&nbsp; Head</div>
<div class="t" style="left:453px;top:499.5px;font-size:12.3px;color:#5a5a5a;letter-spacing:0.3px;">-&nbsp; Spine</div>
<div class="t" style="left:453px;top:515.0px;font-size:12.3px;color:#5a5a5a;letter-spacing:0.3px;">-&nbsp; Arms (2)</div>
<div class="t" style="left:570px;top:484.0px;font-size:12.3px;color:#5a5a5a;letter-spacing:0.3px;">-&nbsp; Pelvis</div>
<div class="t" style="left:570px;top:499.5px;font-size:12.3px;color:#5a5a5a;letter-spacing:0.3px;">-&nbsp; Rib Cage</div>
<div class="t" style="left:570px;top:515.0px;font-size:12.3px;color:#5a5a5a;letter-spacing:0.3px;">-&nbsp; Legs (2)</div>
<div class="t" style="left:431px;top:544.0px;font-size:12.3px;color:#5a5a5a;letter-spacing:0.3px;">The essential elements you will describe using these eight</div>
<div class="t" style="left:431px;top:559.4px;font-size:12.3px;color:#5a5a5a;letter-spacing:0.3px;">parts include a sense of story and composition.&nbsp; Giving the</div>
<div class="t" style="left:431px;top:574.8px;font-size:12.3px;color:#5a5a5a;letter-spacing:0.3px;">pose a &ldquo;sense of story&rdquo; means communicating a unique sense</div>
<div class="t" style="left:431px;top:590.2px;font-size:12.3px;color:#5a5a5a;letter-spacing:0.3px;">of positioning or attitude.&nbsp; Every person has a specific way</div>
<div class="t" style="left:431px;top:605.6px;font-size:12.3px;color:#5a5a5a;letter-spacing:0.3px;">of holding himself or herself when moving.&nbsp; By exaggerating</div>
<div class="t" style="left:431px;top:621.0px;font-size:12.3px;color:#5a5a5a;letter-spacing:0.3px;">the &ldquo;story,&rdquo; you give your viewer a compelling image to</div>
<div class="t" style="left:431px;top:636.4px;font-size:12.3px;color:#5a5a5a;letter-spacing:0.3px;">experience.&nbsp; When creating a gesture drawing, this involves</div>
<div class="t" style="left:431px;top:651.8px;font-size:12.3px;color:#5a5a5a;letter-spacing:0.3px;">developing your figure&rsquo;s proportions and giving your figure a</div>
<div class="t" style="left:431px;top:667.2px;font-size:12.3px;color:#5a5a5a;letter-spacing:0.3px;">sense of balance and weight.</div>
<div class="t" style="left:420px;top:955.0px;font-size:12.3px;color:#5a5a5a;letter-spacing:0.3px;">The lines most crucial to showing a figure are the &ldquo;C&rdquo; curve,</div>
<div class="t" style="left:420px;top:970.4px;font-size:12.3px;color:#5a5a5a;letter-spacing:0.3px;">the straight (line), and &ldquo;S&rdquo; curve.&nbsp; These lines will continuously</div>
<div class="t" style="left:420px;top:985.8px;font-size:12.3px;color:#5a5a5a;letter-spacing:0.3px;">reappear throughout the book.&nbsp; In this drawing process, you will</div>
<div class="t" style="left:420px;top:1001.2px;font-size:12.3px;color:#5a5a5a;letter-spacing:0.3px;">never use any other type of line.</div>
<div style="left:236px;top:1032px;width:554px;height:92px;background:#b8d9e4;border-radius:14px;"></div>
<div class="t" style="left:246px;top:1039px;font-size:12px;color:#f0f8fb;">TIP:</div>
<div class="t" style="left:274px;top:1039.0px;font-size:12.2px;color:#3e4a50;letter-spacing:0.3px;">When checking the proportion of the figure, try to avoid doing any slow, methodical</div>
<div class="t" style="left:274px;top:1054.4px;font-size:12.2px;color:#3e4a50;letter-spacing:0.3px;">measuring.&nbsp; Instead, base the proportions off of what looks correct after establishing the</div>
<div class="t" style="left:274px;top:1069.8px;font-size:12.2px;color:#3e4a50;letter-spacing:0.3px;">figure from head to foot.&nbsp; If it looks incorrect, change it &mdash; the drawing is still at an early</div>
<div class="t" style="left:274px;top:1085.2px;font-size:12.2px;color:#3e4a50;letter-spacing:0.3px;">stage when correction is easy.&nbsp; The downside to slowly measuring out the figure is that it</div>
<div class="t" style="left:274px;top:1100.6px;font-size:12.2px;color:#3e4a50;letter-spacing:0.3px;">stiffens the poses.&nbsp; Focus on the activity &mdash; the proportion can be corrected later.</div>
<div class="t" style="left:236px;top:1141px;font-size:12px;color:#444;">4</div>
<div class="t" style="left:283px;top:1141px;font-size:12px;color:#a8a8a8;font-family:Liberation Serif,serif;letter-spacing:0.2px;">G<span style="font-size:10px">ESTURE</span> D<span style="font-size:10px">RAWING</span></div>
<div style="left:236px;top:1161px;width:600px;height:5px;background:#5ab3cf;"></div>
<div class="t" style="left:487px;top:1182px;font-size:15px;color:#6a6a6a;font-weight:bold;">wedisk.co.kr/partyplanu</div>
<svg style="left:0;top:0" width="2560" height="1440">
<g fill="none" stroke="#3a3a3a" stroke-width="1.3">
<ellipse cx="560" cy="735" rx="47" ry="16"/>
<path d="M700 762 C695 735,670 722,618 720"/><path d="M626 714 L617 720 L626 727"/>
<rect x="666" y="764" width="71" height="25"/>
<path d="M503 842 C500 860,505 875,515 885"/><path d="M511 878 L516 887 L520 878Z"/>
<rect x="273" y="945" width="95" height="26"/><path d="M266 943 L372 943"/><path d="M270 974 L374 974"/>
</g>
</svg>
<div class="t" style="left:533px;top:729px;font-size:10px;color:#3a3a3a;letter-spacing:0.8px;font-weight:normal;transform:skewX(-3deg)">GESTURE</div>
<div class="t" style="left:480px;top:759px;font-size:10px;color:#3a3a3a;letter-spacing:0.8px;font-weight:normal;transform:skewX(-3deg)">- STORY | COMPOSITION</div>
<div class="t" style="left:482px;top:778px;font-size:10px;color:#3a3a3a;letter-spacing:0.8px;font-weight:normal;transform:skewX(-3deg)">- PORPORTION</div>
<div class="t" style="left:482px;top:797px;font-size:10px;color:#3a3a3a;letter-spacing:0.8px;font-weight:normal;transform:skewX(-3deg)">- WEIGHT / BALANCE</div>
<div class="t" style="left:482px;top:815px;font-size:10px;color:#3a3a3a;letter-spacing:0.8px;font-weight:normal;transform:skewX(-3deg)">- ANATOMY</div>
<div class="t" style="left:672px;top:769px;font-size:11px;color:#3a3a3a;letter-spacing:0.8px;font-weight:normal;transform:skewX(-3deg)">8 PARTS</div>
<div class="t" style="left:527px;top:870px;font-size:14px;color:#3a3a3a;letter-spacing:2px;font-weight:normal;transform:skewX(-3deg)">"C" , "S" , "I"</div>
<div class="t" style="left:586px;top:893px;font-size:9px;color:#3a3a3a;letter-spacing:0.6px;font-weight:normal;transform:skewX(-3deg)">&bull; ASYMMETRY OF LINE</div>
<div class="t" style="left:586px;top:911px;font-size:9px;color:#3a3a3a;letter-spacing:0.6px;font-weight:normal;transform:skewX(-3deg)">&bull; REPETITION OF CURVE</div>
<div class="t" style="left:586px;top:928px;font-size:9px;color:#3a3a3a;letter-spacing:0.6px;font-weight:normal;transform:skewX(-3deg)">&bull; WRAPPING LINES</div>
<div class="t" style="left:284px;top:950px;font-size:13px;color:#3a3a3a;letter-spacing:1.2px;font-weight:normal;transform:skewX(-3deg)">8 PARTS</div>
<svg style="left:0;top:0" width="2560" height="1440">
<ellipse cx="323" cy="478" rx="17" ry="21" fill="#c0dcef"/>
<ellipse cx="324" cy="570" rx="36" ry="47" fill="#bcd89c"/>
<path d="M286 640 C290 628,355 626,362 640 C365 660,360 676,350 681 C330 684,300 684,292 678 C286 665,285 650,286 640Z" fill="#f5c390"/>
<path d="M317 537 L329 537 L331 579 L317 579Z" fill="#a8cc90" stroke="#556" stroke-width="0.6"/>
<path d="M316 579 L324 579 L326 629 L321 629Z" fill="#3a3a3a"/>
<g fill="none" stroke="#333" stroke-width="1" opacity="0.9">
<path d="M306 470 C306 456,318 454,326 456 C338 458,342 466,340 480 L335 503 L312 504 C306 495,304 482,306 470Z"/>
<path d="M314 504 L312 527 M335 503 L333 523"/>
<path d="M275 525 L373 522 M274 534 L276 523 M373 522 L372 530"/>
<path d="M276 534 L239 593 L276 649 M258 671 L276 649"/>
<path d="M284 534 C286 570,287 600,288 628"/>
<path d="M367 532 L383 690 M371 532 L386 692" opacity="0.5"/>
<path d="M300 600 L322 620 M350 593 L328 620" opacity="0.6"/>
<path d="M296 640 C300 660,302 672,306 676 L356 674 C358 660,356 650,354 640" opacity="0.7"/>
<path d="M277 666 L303 774 L295 794 L305 902"/>
<path d="M364 666 L338 770 L350 798 L336 902"/>
<path d="M288 775 L304 776 M330 775 L346 776" opacity="0.7"/>
<path d="M276 923 L312 904 M335 905 L369 923"/>
<path d="M275 662 L290 666"/>
</g>
</svg>
<div style="left:144px;top:883px;width:34px;height:439px;background:#f6f6f6;box-shadow:0 0 0 1px #ccc;"></div>
<div style="left:146px;top:885px;width:30px;height:28px;background:#2aa9e0;"></div>
<div style="left:146px;top:976px;width:30px;height:28px;background:#2aa9e0;"></div>
<div style="left:146px;top:844px;width:30px;height:30px;border-radius:50%;background:#111"></div>
<svg style="left:146px;top:844px" width="30" height="30"><path d="M15 6 C10 12,10 16,12 22 L18 22 C20 16,20 12,15 6Z" fill="#fff"/><circle cx="15" cy="15" r="2" fill="#111"/></svg>
<svg style="left:0;top:0" width="2560" height="1440">
<g fill="none" stroke="#222" stroke-width="1.6">
<path d="M151 899 C156 892,166 892,171 899 C166 906,156 906,151 899Z"/><circle cx="161" cy="899" r="3.5" fill="#222"/>
<path d="M152 920 L152 937 L157 932 L161 941 L164 939 L160 931 L167 930Z"/>
<circle cx="161" cy="961" r="8"/><path d="M152 972 L170 950"/>
<path d="M152 992 L162 982 L170 990 L160 1000Z"/>
<path d="M152 1013 L170 1031 M152 1013 L152 1021 M152 1013 L160 1013"/>
<path d="M152 1043 L162 1036 L172 1048 L162 1056Z"/>
<path d="M152 1110 C152 1102,162 1100,168 1106 C172 1112,168 1118,162 1118 M152 1110 L156 1104 M152 1110 L158 1112"/>
<path d="M154 1133 L168 1133 L167 1148 L155 1148Z M152 1132 L170 1132 M158 1128 L164 1128"/>
<rect x="152" y="1160" width="18" height="13" rx="2"/><path d="M155 1173 L153 1179 M167 1173 L169 1179"/>
<rect x="151" y="1193" width="20" height="14" rx="2"/><circle cx="161" cy="1200" r="4.5"/>
<rect x="153" y="1219" width="16" height="20" rx="2"/><path d="M156 1225 L166 1225 M156 1230 L166 1230 M156 1235 L166 1235"/>
</g>
<circle cx="161" cy="1080" r="4" fill="#111"/>
<rect x="146" y="1245" width="15" height="14" fill="#1fa0ea"/><rect x="161" y="1245" width="15" height="14" fill="#f6e000"/>
<rect x="146" y="1259" width="15" height="14" fill="#ea2a8a"/><rect x="161" y="1259" width="15" height="14" fill="#10c030"/>
<rect x="146" y="1273" width="15" height="14" fill="#fff"/><rect x="161" y="1273" width="15" height="14" fill="#000"/>
<rect x="146" y="1289" width="30" height="31" fill="#10d020"/>
</svg>
<div style="left:2192px;top:140px;width:2px;height:1205px;background:#1e1e1e;"></div>
<div style="left:2198px;top:128px;width:42px;height:42px;background:#333;border:1px solid #1e1e1e;border-radius:3px;overflow:hidden"><div style="left:6px;top:6px;width:30px;height:30px;background:#4a4a4a"></div><div style="left:6px;top:6px;width:24px;height:24px;border-radius:50%;background:radial-gradient(circle at 40% 35%,#bbb,#777 60%,#444)"></div><div style="left:0;top:25px;width:42px;text-align:center;font-size:10px;font-weight:bold;color:#ddd">BPR</div><div style="left:0;top:26px;width:42px;text-align:center;font-size:10px;line-height:12px;color:#d0d0d0"></div></div>
<div class="t" style="left:2201px;top:177px;font-size:12px;color:#d0d0d0;">SPix 3</div>
<div style="left:2198px;top:194px;width:44px;height:1px;background:#4a4a4a;"></div>
<div style="left:2210px;top:191px;width:14px;height:7px;border-radius:4px;background:#f8952a"></div>
<div style="left:2198px;top:200px;width:42px;height:42px;background:#333;border:1px solid #1e1e1e;border-radius:3px;overflow:hidden"><svg style="left:8px;top:6px" width="30" height="22"><path d="M4 18 L4 8 L6 6 L8 8 L8 4 L10 3 L12 4 L12 8 L14 5 L16 6 L16 12 L12 19Z" fill="#ddd"/><rect x="17" y="3" width="11" height="14" fill="none" stroke="#ddd"/><path d="M22 5 L22 15 M18 10 L27 10" stroke="#ddd"/></svg><div style="left:0;top:26px;width:42px;text-align:center;font-size:10px;line-height:12px;color:#d0d0d0">Scroll</div></div>
<div style="left:2198px;top:248px;width:42px;height:42px;background:#333;border:1px solid #1e1e1e;border-radius:3px;overflow:hidden"><svg style="left:8px;top:6px" width="30" height="22"><circle cx="12" cy="8" r="6" fill="none" stroke="#d8d8d8" stroke-width="1.8"/><path d="M7 13 L2 19" stroke="#d8d8d8" stroke-width="2.4"/><rect x="17" y="4" width="11" height="12" fill="none" stroke="#ddd"/><path d="M22 6 L22 14" stroke="#ddd"/></svg><div style="left:0;top:26px;width:42px;text-align:center;font-size:10px;line-height:12px;color:#d0d0d0">Zoom</div></div>
<div style="left:2198px;top:296px;width:42px;height:42px;background:#333;border:1px solid #1e1e1e;border-radius:3px;overflow:hidden"><svg style="left:8px;top:6px" width="30" height="22"><circle cx="12" cy="8" r="6" fill="none" stroke="#d8d8d8" stroke-width="1.8"/><path d="M7 13 L2 19" stroke="#d8d8d8" stroke-width="2.4"/><rect x="17" y="6" width="11" height="11" fill="none" stroke="#ddd"/><text x="18" y="16" font-size="8" fill="#ddd">x1</text></svg><div style="left:0;top:26px;width:42px;text-align:center;font-size:10px;line-height:12px;color:#d0d0d0">Actual</div></div>
<div style="left:2198px;top:344px;width:42px;height:42px;background:#333;border:1px solid #1e1e1e;border-radius:3px;overflow:hidden"><svg style="left:8px;top:6px" width="30" height="22"><circle cx="12" cy="8" r="6" fill="none" stroke="#d8d8d8" stroke-width="1.8"/><path d="M7 13 L2 19" stroke="#d8d8d8" stroke-width="2.4"/><rect x="17" y="6" width="11" height="11" fill="#aaa"/></svg><div style="left:0;top:26px;width:42px;text-align:center;font-size:10px;line-height:12px;color:#d0d0d0">AAHalf</div></div>
<div style="left:2198px;top:392px;width:42px;height:42px;background:#333;border:1px solid #1e1e1e;border-radius:3px;overflow:hidden"><div style="left:0;top:1px;width:42px;text-align:center;font-size:9px;font-weight:bold;color:#ddd">Dynamic</div><svg style="left:6px;top:12px" width="30" height="14"><path d="M1 2 L29 2 M1 7 L29 7 M1 12 L29 12 M8 2 L3 12 M15 2 L15 12 M22 2 L27 12" stroke="#ddd" stroke-width="1"/></svg><div style="left:0;top:26px;width:42px;text-align:center;font-size:10px;line-height:12px;color:#d0d0d0">Persp</div></div>
<div style="left:2198px;top:439px;width:42px;height:43px;background:#f8952a;border:1px solid #1e1e1e;border-radius:3px;overflow:hidden"><svg style="left:6px;top:10px" width="30" height="18"><path d="M1 14 L29 14" stroke="#2a0f00" stroke-width="2"/><path d="M15 3 L15 10 M11 7 L15 11 L19 7" stroke="#2a0f00" stroke-width="2" fill="none"/></svg><div style="left:28px;top:-1px;font-size:9px;font-weight:bold;color:#fff">Z</div><div style="left:0;top:27px;width:42px;text-align:center;font-size:10px;line-height:12px;color:#2a0f00">Floor</div></div>
<div style="left:2198px;top:487px;width:42px;height:42px;background:#333;border:1px solid #1e1e1e;border-radius:3px;overflow:hidden"><svg style="left:6px;top:10px" width="30" height="18"><path d="M2 10 L28 10 M15 4 L15 16" stroke="#ddd" stroke-width="1.3"/><path d="M3 10 L8 6 L8 14Z M27 10 L22 6 L22 14Z" fill="#ddd"/></svg><div style="left:0;top:26px;width:42px;text-align:center;font-size:10px;line-height:12px;color:#d0d0d0">L.Sym</div></div>
<div style="left:2198px;top:535px;width:42px;height:42px;background:#333;border:1px solid #1e1e1e;border-radius:3px;overflow:hidden"><svg style="left:6px;top:6px" width="32" height="32"><rect x="14" y="12" width="14" height="11" rx="2" fill="#8a8a8a"/><path d="M17 12 L17 8 C17 4,25 4,25 8 L25 12" stroke="#8a8a8a" stroke-width="2" fill="none"/><circle cx="9" cy="22" r="5" fill="#6a6a6a"/><rect x="5" y="20" width="14" height="8" fill="#6a6a6a"/></svg><div style="left:0;top:26px;width:42px;text-align:center;font-size:10px;line-height:12px;color:#d0d0d0"></div></div>
<div style="left:2198px;top:583px;width:44px;height:21px;background:#f8952a;border:1px solid #1e1e1e;border-radius:4px;box-sizing:border-box;color:#2a0f00;font-size:11px;line-height:20px;padding-left:16px">XYZ</div>
<svg style="left:2201px;top:586px" width="18" height="16"><path d="M9 3 A5.5 5.5 0 1 0 14 9" fill="none" stroke="#2a0f00" stroke-width="1.6"/><path d="M6 1 L10 3 L7 6" fill="none" stroke="#2a0f00" stroke-width="1.4"/></svg>
<svg style="left:2212px;top:609px" width="18" height="16"><path d="M9 3 A5.5 5.5 0 1 0 14 9" fill="none" stroke="#bbb" stroke-width="1.6"/><path d="M6 1 L10 3 L7 6" fill="none" stroke="#bbb" stroke-width="1.4"/><text x="8" y="15" font-size="8" fill="#bbb" font-family="Liberation Sans">Y</text></svg>
<svg style="left:2218px;top:633px" width="18" height="16"><path d="M9 3 A5.5 5.5 0 1 0 14 9" fill="none" stroke="#bbb" stroke-width="1.6"/><path d="M6 1 L10 3 L7 6" fill="none" stroke="#bbb" stroke-width="1.4"/><text x="8" y="15" font-size="8" fill="#bbb" font-family="Liberation Sans">Z</text></svg>
<div style="left:2198px;top:655px;width:42px;height:43px;background:#333;border:1px solid #1e1e1e;border-radius:3px;overflow:hidden"><svg style="left:8px;top:5px" width="26" height="24"><path d="M2 2 L8 8 M24 2 L18 8 M2 22 L8 16 M24 22 L18 16" stroke="#ddd" stroke-width="1.3"/><circle cx="13" cy="12" r="4" fill="#bbb"/></svg><div style="left:0;top:27px;width:42px;text-align:center;font-size:10px;line-height:12px;color:#d0d0d0">Frame</div></div>
<div style="left:2198px;top:703px;width:42px;height:43px;background:#333;border:1px solid #1e1e1e;border-radius:3px;overflow:hidden"><div style="left:18px;top:6px;width:18px;height:18px;border-radius:50%;background:radial-gradient(circle at 40% 35%,#ddd,#777)"></div><svg style="left:6px;top:8px" width="20" height="20"><path d="M4 18 L4 10 L6 8 L8 10 L8 6 L10 5 L12 6 L12 10 L14 7 L16 8 L16 14 L12 19Z" fill="#ddd"/></svg><div style="left:0;top:27px;width:42px;text-align:center;font-size:10px;line-height:12px;color:#d0d0d0">Move</div></div>
<div style="left:2198px;top:751px;width:42px;height:43px;background:#333;border:1px solid #1e1e1e;border-radius:3px;overflow:hidden"><div style="left:18px;top:6px;width:18px;height:18px;border-radius:50%;background:radial-gradient(circle at 40% 35%,#ddd,#777)"></div><svg style="left:8px;top:6px" width="30" height="22"><circle cx="12" cy="8" r="6" fill="none" stroke="#d8d8d8" stroke-width="1.8"/><path d="M7 13 L2 19" stroke="#d8d8d8" stroke-width="2.4"/></svg><div style="left:0;top:27px;width:42px;text-align:center;font-size:10px;line-height:12px;color:#d0d0d0">Zoom3D</div></div>
<div style="left:2198px;top:800px;width:42px;height:42px;background:#333;border:1px solid #1e1e1e;border-radius:3px;overflow:hidden"><div style="left:18px;top:6px;width:18px;height:18px;border-radius:50%;background:radial-gradient(circle at 40% 35%,#ddd,#777)"></div><svg style="left:6px;top:4px" width="30" height="26"><path d="M8 10 C8 2,22 2,22 10" stroke="#ddd" stroke-width="2" fill="none"/><path d="M20 14 C26 16,26 22,20 24" stroke="#ddd" stroke-width="2" fill="none"/></svg><div style="left:0;top:26px;width:42px;text-align:center;font-size:10px;line-height:12px;color:#d0d0d0">Rotate</div></div>
<div style="left:2198px;top:848px;width:42px;height:42px;background:#333;border:1px solid #1e1e1e;border-radius:3px;overflow:hidden"><div style="left:0;top:1px;width:42px;text-align:center;font-size:9px;font-weight:bold;color:#ddd">Line Fill</div><svg style="left:9px;top:12px" width="24" height="18"><rect x="1" y="1" width="22" height="16" fill="none" stroke="#ddd"/><path d="M1 6 L23 6 M1 11 L23 11 M8 1 L8 17 M15 1 L15 17" stroke="#ddd"/></svg><div style="left:0;top:26px;width:42px;text-align:center;font-size:10px;line-height:12px;color:#d0d0d0">PolyF</div></div>
<div style="left:2198px;top:895px;width:42px;height:43px;background:#333;border:1px solid #1e1e1e;border-radius:3px;overflow:hidden"><div style="left:10px;top:10px;width:18px;height:18px;border-radius:50%;background:radial-gradient(circle at 40% 35%,#aaa,#444)"></div><div style="left:18px;top:5px;width:14px;height:13px;border:1px solid #aaa"></div><div style="left:0;top:27px;width:42px;text-align:center;font-size:10px;line-height:12px;color:#d0d0d0">Transp</div></div>
<div style="left:2198px;top:944px;width:42px;height:42px;background:#7a4c1c;border:1px solid #1e1e1e;border-radius:3px;overflow:hidden"><div style="left:12px;top:8px;width:18px;height:18px;border-radius:50%;background:#8a5a28"></div><svg style="left:10px;top:4px" width="24" height="24"><path d="M2 22 L22 2" stroke="#5a3a18" stroke-width="1.5"/></svg><div style="left:0;top:26px;width:42px;text-align:center;font-size:10px;line-height:12px;color:#5a3a18">Ghost</div></div>
<div style="left:2198px;top:992px;width:42px;height:42px;background:#333;border:1px solid #1e1e1e;border-radius:3px;overflow:hidden"><div style="left:0;top:1px;width:42px;text-align:center;font-size:9px;font-weight:bold;color:#999">Dynamic</div><div style="left:8px;top:17px;width:14px;height:14px;border-radius:50%;background:#666"></div><div style="left:20px;top:17px;width:14px;height:14px;border-radius:50%;background:#666"></div><div style="left:14px;top:12px;width:14px;height:14px;border-radius:50%;background:#ddd"></div><div style="left:0;top:26px;width:42px;text-align:center;font-size:10px;line-height:12px;color:#d0d0d0">Solo</div></div>
<div style="left:2198px;top:1040px;width:42px;height:42px;background:#333;border:1px solid #1e1e1e;border-radius:3px;overflow:hidden"><svg style="left:7px;top:5px" width="28" height="24"><path d="M4 4 L10 10 M24 4 L18 10 M4 20 L10 14 M24 20 L18 14 M2 12 L8 12 M20 12 L26 12" stroke="#ddd" stroke-width="1.3"/><circle cx="14" cy="12" r="1.5" fill="#ddd"/></svg><div style="left:0;top:26px;width:42px;text-align:center;font-size:10px;line-height:12px;color:#d0d0d0">Xpose</div></div>
<div style="left:2197px;top:1087px;width:91px;height:91px;background:#323232;border:1px solid #1a1a1a;border-radius:3px;overflow:hidden"><div style="left:0;top:74px;width:91px;height:18px;background:#2b2b2b"></div><div class="t" style="left:77px;top:38px;font-size:13px;color:#ccc">Tex</div></div>
<div class="b" style="left:2198px;top:1184px;width:92px;height:20px;background:#2d2d2d;border:1px solid #262626;color:#5c5c5c;font-size:13px;justify-content:flex-start;padding-left:5px;">Texture On</div>
<div class="b" style="left:2198px;top:1208px;width:92px;height:68px;background:#333333;border:1px solid #1e1e1e;color:#d0d0d0;font-size:13px;justify-content:flex-start;padding-left:3px;">MaskByFeature</div>
<div class="b" style="left:2198px;top:1280px;width:92px;height:20px;background:#f8952a;border:1px solid #160600;color:#2a0f00;font-size:13px;justify-content:flex-start;padding-left:3px;box-shadow:0 0 0 0.6px #160600;">Border</div>
<div class="b" style="left:2198px;top:1304px;width:92px;height:20px;background:#f8952a;border:1px solid #160600;color:#2a0f00;font-size:13px;justify-content:flex-start;padding-left:3px;box-shadow:0 0 0 0.6px #160600;">Groups</div>
<div class="b" style="left:2198px;top:1328px;width:92px;height:20px;background:#f8952a;border:1px solid #160600;color:#2a0f00;font-size:13px;justify-content:flex-start;padding-left:3px;box-shadow:0 0 0 0.6px #160600;">Crease</div>
<div class="t" style="left:2201px;top:1353px;font-size:13px;color:#d0d0d0;">Split Screen 0</div>
<div style="left:2198px;top:1369px;width:92px;height:1px;background:#4a4a4a;"></div>
<div style="left:2198px;top:1366px;width:14px;height:7px;border-radius:4px;background:#f8952a"></div>
<div style="left:2300px;top:668px;width:6px;height:49px;background:repeating-linear-gradient(45deg,#3c3c3c 0 1px,#2a2a2a 1px 2px)"></div>
<div style="left:2300px;top:744px;width:6px;height:52px;background:repeating-linear-gradient(45deg,#3c3c3c 0 1px,#2a2a2a 1px 2px)"></div>
<svg style="left:2299px;top:720px" width="10" height="24"><path d="M2 1 L9 6 L2 11Z" fill="#555"/><path d="M9 13 L2 18 L9 23Z" fill="#555"/></svg>
<div style="left:2310px;top:23px;width:250px;height:1417px;background:#292929;"></div>
<svg style="left:2312px;top:24px" width="24" height="22"><path d="M4 8 L12 2 L15 5 L8 10Z" fill="#999"/><path d="M10 7 L20 20" stroke="#888" stroke-width="2.5"/></svg>
<div class="t" style="left:2339px;top:26px;font-size:17px;color:#e0e0e0;">Tool</div>
<svg style="left:2528px;top:27px" width="16" height="16"><path d="M4 4 A6 6 0 1 0 8 2" fill="none" stroke="#ddd" stroke-width="2"/><path d="M2 1 L6 5 L2 7Z" fill="#ddd"/></svg>
<div style="left:2334px;top:51px;width:198px;height:343px;border:1px solid #171717;border-radius:8px;background:#2d2d2d"></div>
<div class="b" style="left:2340px;top:58px;width:92px;height:20px;background:#333333;border:1px solid #1e1e1e;color:#d0d0d0;font-size:13px;justify-content:flex-start;padding-left:3px;">Load Tool</div>
<div class="b" style="left:2436px;top:58px;width:93px;height:20px;background:#333333;border:1px solid #1e1e1e;color:#d0d0d0;font-size:13px;justify-content:flex-start;padding-left:3px;">Save As</div>
<div class="b" style="left:2340px;top:82px;width:189px;height:20px;background:#333333;border:1px solid #1e1e1e;color:#d0d0d0;font-size:13px;justify-content:flex-start;padding-left:3px;">Load Tools From Project</div>
<div class="b" style="left:2340px;top:106px;width:92px;height:20px;background:#333333;border:1px solid #1e1e1e;color:#d0d0d0;font-size:13px;justify-content:flex-start;padding-left:3px;">Copy Tool</div>
<div class="b" style="left:2436px;top:106px;width:93px;height:20px;background:#2d2d2d;border:1px solid #262626;color:#5c5c5c;font-size:13px;justify-content:flex-start;padding-left:3px;">Paste Tool</div>
<div class="b" style="left:2340px;top:130px;width:92px;height:20px;background:#333333;border:1px solid #1e1e1e;color:#d0d0d0;font-size:13px;justify-content:flex-start;padding-left:3px;">Import</div>
<div class="b" style="left:2436px;top:130px;width:93px;height:20px;background:#333333;border:1px solid #1e1e1e;color:#d0d0d0;font-size:13px;justify-content:flex-start;padding-left:3px;">Export</div>
<div class="b" style="left:2340px;top:154px;width:44px;height:20px;background:#333333;border:1px solid #1e1e1e;color:#d0d0d0;font-size:13px;justify-content:flex-start;padding-left:3px;">Clone</div>
<div class="b" style="left:2388px;top:154px;width:141px;height:20px;background:#333333;border:1px solid #1e1e1e;color:#d0d0d0;font-size:13px;justify-content:flex-start;padding-left:3px;">Make PolyMesh3D</div>
<div class="b" style="left:2340px;top:178px;width:44px;height:20px;background:#333333;border:1px solid #1e1e1e;color:#d0d0d0;font-size:13px;justify-content:flex-start;padding-left:3px;">GoZ</div>
<div class="b" style="left:2388px;top:178px;width:44px;height:20px;background:#333333;border:1px solid #1e1e1e;color:#d0d0d0;font-size:13px;justify-content:flex-start;padding-left:3px;">All</div>
<div class="b" style="left:2436px;top:178px;width:68px;height:20px;background:#333333;border:1px solid #1e1e1e;color:#d0d0d0;font-size:13px;justify-content:flex-start;padding-left:3px;">Visible</div>
<div class="b" style="left:2508px;top:178px;width:21px;height:20px;background:#333333;border:1px solid #1e1e1e;color:#d0d0d0;font-size:13px;justify-content:flex-start;padding-left:3px;">R</div>
<div class="b" style="left:2340px;top:202px;width:189px;height:20px;background:#333333;border:1px solid #1e1e1e;color:#d0d0d0;font-size:13px;justify-content:flex-start;padding-left:3px;">Lightbox<span style="display:inline-block;width:0;height:0;border-left:10px solid #d0d0d0;border-top:6px solid transparent;border-bottom:6px solid transparent;margin:0 1px"></span>Tools</div>
<div class="b" style="left:2508px;top:226px;width:21px;height:21px;background:#333333;border:1px solid #1e1e1e;color:#d0d0d0;font-size:13px;justify-content:flex-start;padding-left:3px;">R</div>
<div class="t" style="left:2347px;top:226px;font-size:13px;color:#ddd;">50</div>
<div style="left:2345px;top:244px;width:155px;height:1px;background:#555;"></div>
<div style="left:2490px;top:241px;width:14px;height:7px;border-radius:4px;background:#f8952a"></div>
<div style="left:2340px;top:250px;width:91px;height:91px;background:#333;border:1px solid #111;overflow:hidden"><div style="left:0;top:75px;width:91px;height:16px;background:#2b2b2b;color:#bbb;font-size:12px;text-align:center;line-height:16px">1</div><div style="left:17px;top:1px;width:58px;height:74px;border-radius:50% 50% 50% 50%/42% 42% 58% 58%;background:radial-gradient(ellipse at 45% 35%,#fafafa,#ececec 50%,#c4c4c4 95%)"></div></div>
<div style="left:2436px;top:250px;width:92px;height:43px;background:#333;border:1px solid #111;overflow:hidden"><div style="left:0;top:27px;width:92px;height:16px;background:#2b2b2b"></div><div style="left:33px;top:1px;width:27px;height:33px;border-radius:50% 50% 50% 50%/42% 42% 58% 58%;background:radial-gradient(ellipse at 45% 35%,#fafafa,#e4e4e4 50%,#b4b4b4)"></div><div style="left:46px;top:33px;width:1px;height:8px;background:#bbb"></div></div>
<div style="left:2436px;top:297px;width:93px;height:45px;background:#2f2f2f"><div style="left:0;top:30px;width:93px;color:#ddd;font-size:13px;text-align:center">AlphaBrush</div><svg style="left:26px;top:0px" width="40" height="32"><g transform="rotate(-40 20 16)"><ellipse cx="22" cy="20" rx="9" ry="11" fill="#1c3490"/><ellipse cx="20" cy="16" rx="8" ry="10" fill="#3050c0"/><ellipse cx="18" cy="11" rx="6.5" ry="8" fill="#5a7ae0"/><ellipse cx="16" cy="7" rx="4" ry="5" fill="#c8d8ff"/></g></svg></div>
<div style="left:2340px;top:345px;width:92px;height:45px;background:#2f2f2f"><div style="left:0;top:30px;width:92px;color:#ddd;font-size:13px;text-align:center">SimpleBrush</div><svg style="left:30px;top:0px" width="32" height="32"><path d="M23 6 C18 1,9 3,11 10 C13 16,24 15,22 23 C20 29,10 30,8 24" fill="none" stroke="#c86a08" stroke-width="8" stroke-linecap="round"/><path d="M23 6 C18 1,9 3,11 10 C13 16,24 15,22 23 C20 29,10 30,8 24" fill="none" stroke="#f7b634" stroke-width="4.5" stroke-linecap="round"/></svg></div>
<div style="left:2436px;top:345px;width:93px;height:45px;background:#2f2f2f"><div style="left:0;top:30px;width:93px;color:#ddd;font-size:13px;text-align:center">EraserBrush</div><svg style="left:28px;top:0px" width="36" height="32"><path d="M6 22 C2 12,8 2,18 2 C28 2,34 12,30 22 C28 28,22 31,16 30" fill="none" stroke="#a85a28" stroke-width="6" stroke-linecap="round"/><circle cx="18" cy="5" r="1.5" fill="#f0c8a0"/></svg></div>
<div style="left:2334px;top:405px;width:198px;height:1040px;border:1px solid #171717;border-radius:8px;background:#2d2d2d"></div>
<div class="t" style="left:2348px;top:408px;font-size:13px;color:#e0e0e0;">Subtool</div>
<div class="t" style="left:2342px;top:428px;font-size:13px;color:#d0d0d0;">Visible Count 14</div>
<div style="left:2342px;top:444px;width:186px;height:1px;background:#4a4a4a;"></div>
<div style="left:2438px;top:441px;width:14px;height:7px;border-radius:4px;background:#f8952a"></div>
<div class="b" style="left:2340px;top:451px;width:20px;height:20px;background:#f8952a;border:1px solid #160600;color:#2a0f00;font-size:13px;justify-content:center;padding-left:0px;box-shadow:0 0 0 0.6px #160600;">V1</div>
<div class="b" style="left:2364px;top:451px;width:20px;height:20px;background:#333333;border:1px solid #1e1e1e;color:#d0d0d0;font-size:13px;justify-content:center;padding-left:0px;">V2</div>
<div class="b" style="left:2388px;top:451px;width:20px;height:20px;background:#333333;border:1px solid #1e1e1e;color:#d0d0d0;font-size:13px;justify-content:center;padding-left:0px;">V3</div>
<div class="b" style="left:2412px;top:451px;width:20px;height:20px;background:#333333;border:1px solid #1e1e1e;color:#d0d0d0;font-size:13px;justify-content:center;padding-left:0px;">V4</div>
<div class="b" style="left:2436px;top:451px;width:20px;height:20px;background:#333333;border:1px solid #1e1e1e;color:#d0d0d0;font-size:13px;justify-content:center;padding-left:0px;">V5</div>
<div class="b" style="left:2460px;top:451px;width:20px;height:20px;background:#333333;border:1px solid #1e1e1e;color:#d0d0d0;font-size:13px;justify-content:center;padding-left:0px;">V6</div>
<div class="b" style="left:2484px;top:451px;width:20px;height:20px;background:#333333;border:1px solid #1e1e1e;color:#d0d0d0;font-size:13px;justify-content:center;padding-left:0px;">V7</div>
<div class="b" style="left:2508px;top:451px;width:21px;height:20px;background:#333333;border:1px solid #1e1e1e;color:#d0d0d0;font-size:13px;justify-content:center;padding-left:0px;">V8</div>
<div style="left:2356px;top:473px;width:172px;height:46px;background:#333;border:1px solid #111;border-radius:3px;overflow:hidden"><div style="left:0;top:30px;width:172px;height:16px;background:#2b2b2b;color:#ddd;font-size:12px;text-align:center;line-height:16px">1</div><div style="left:5px;top:1px;width:27px;height:33px;border-radius:50% 50% 50% 50%/42% 42% 58% 58%;background:radial-gradient(ellipse at 45% 35%,#fafafa,#e4e4e4 50%,#b4b4b4)"></div></div>
<svg style="left:2400px;top:474px" width="128" height="16"><path d="M12 6 L22 6 M17 6 L17 12" stroke="#888" stroke-width="1.5"/><circle cx="33" cy="8" r="4.5" fill="#ddd"/><circle cx="39" cy="8" r="4.5" fill="#eee"/><circle cx="54" cy="8" r="4.5" fill="#555"/><circle cx="59" cy="8" r="4.5" fill="#444"/><circle cx="74" cy="8" r="4.5" fill="none" stroke="#555"/><circle cx="79" cy="8" r="4.5" fill="none" stroke="#555"/><path d="M92 12 L104 4" stroke="#555" stroke-width="2"/><path d="M110 8 C114 2,124 2,128 8 C124 12,114 12,110 8Z" fill="none" stroke="#ddd" stroke-width="1.5"/><circle cx="119" cy="8" r="2.5" fill="#ddd"/></svg>
<div style="left:2343px;top:475px;width:5px;height:667px;background:#8a5a28;border-radius:3px;"></div>
<div class="b" style="left:2340px;top:1147px;width:92px;height:20px;background:#2d2d2d;border:1px solid #262626;color:#5c5c5c;font-size:13px;justify-content:flex-start;padding-left:3px;">List All</div>
<div class="b" style="left:2436px;top:1147px;width:44px;height:20px;background:#2d2d2d;border:1px solid #262626;color:#5c5c5c;font-size:13px;justify-content:flex-start;padding-left:3px;"></div>
<div class="b" style="left:2484px;top:1147px;width:44px;height:20px;background:#2d2d2d;border:1px solid #262626;color:#5c5c5c;font-size:13px;justify-content:flex-start;padding-left:3px;"></div>
<div class="b" style="left:2340px;top:1171px;width:92px;height:20px;background:#333333;border:1px solid #1e1e1e;color:#d0d0d0;font-size:13px;justify-content:flex-start;padding-left:3px;">New Folder</div>
<div class="b" style="left:2436px;top:1171px;width:44px;height:20px;background:#2d2d2d;border:1px solid #262626;color:#5c5c5c;font-size:13px;justify-content:flex-start;padding-left:3px;"></div>
<div class="b" style="left:2484px;top:1171px;width:44px;height:20px;background:#2d2d2d;border:1px solid #262626;color:#5c5c5c;font-size:13px;justify-content:flex-start;padding-left:3px;"></div>
<div class="b" style="left:2340px;top:1219px;width:92px;height:20px;background:#333333;border:1px solid #1e1e1e;color:#d0d0d0;font-size:13px;justify-content:flex-start;padding-left:3px;">Rename</div>
<div class="b" style="left:2436px;top:1219px;width:92px;height:20px;background:#2d2d2d;border:1px solid #262626;color:#5c5c5c;font-size:13px;justify-content:flex-start;padding-left:3px;">AutoReorder</div>
<div class="b" style="left:2340px;top:1242px;width:92px;height:21px;background:#333333;border:1px solid #1e1e1e;color:#d0d0d0;font-size:13px;justify-content:flex-start;padding-left:3px;">All Low</div>
<div class="b" style="left:2436px;top:1242px;width:92px;height:21px;background:#333333;border:1px solid #1e1e1e;color:#d0d0d0;font-size:13px;justify-content:flex-start;padding-left:3px;">All High</div>
<div class="b" style="left:2340px;top:1267px;width:92px;height:21px;background:#333333;border:1px solid #1e1e1e;color:#d0d0d0;font-size:13px;justify-content:flex-start;padding-left:3px;">All To Home</div>
<div class="b" style="left:2436px;top:1267px;width:92px;height:21px;background:#333333;border:1px solid #1e1e1e;color:#d0d0d0;font-size:13px;justify-content:flex-start;padding-left:3px;">All To Target</div>
<div class="b" style="left:2340px;top:1291px;width:92px;height:20px;background:#333333;border:1px solid #1e1e1e;color:#d0d0d0;font-size:13px;justify-content:flex-start;padding-left:3px;">Copy</div>
<div class="b" style="left:2436px;top:1291px;width:92px;height:20px;background:#2d2d2d;border:1px solid #262626;color:#5c5c5c;font-size:13px;justify-content:flex-start;padding-left:3px;">Paste</div>
<div class="b" style="left:2340px;top:1315px;width:92px;height:44px;background:#333333;border:1px solid #1e1e1e;color:#d0d0d0;font-size:13px;justify-content:flex-start;padding-left:3px;">Duplicate</div>
<div class="b" style="left:2436px;top:1315px;width:92px;height:21px;background:#333333;border:1px solid #1e1e1e;color:#d0d0d0;font-size:13px;justify-content:flex-start;padding-left:3px;">Append</div>
<div class="b" style="left:2436px;top:1339px;width:92px;height:20px;background:#333333;border:1px solid #1e1e1e;color:#d0d0d0;font-size:13px;justify-content:flex-start;padding-left:3px;">Insert</div>
<div class="b" style="left:2340px;top:1363px;width:92px;height:44px;background:#333333;border:1px solid #1e1e1e;color:#d0d0d0;font-size:13px;justify-content:flex-start;padding-left:3px;">Delete</div>
<div class="b" style="left:2436px;top:1363px;width:92px;height:21px;background:#2d2d2d;border:1px solid #262626;color:#5c5c5c;font-size:13px;justify-content:flex-start;padding-left:3px;">Del Other</div>
<div class="b" style="left:2436px;top:1387px;width:92px;height:20px;background:#333333;border:1px solid #1e1e1e;color:#d0d0d0;font-size:13px;justify-content:flex-start;padding-left:3px;">Del All</div>
<svg style="left:2436px;top:1147px" width="92" height="44"><path d="M22 4 L16 11 L20 11 L20 17 L24 17 L24 11 L28 11Z" fill="#666"/><path d="M70 17 L64 10 L68 10 L68 4 L72 4 L72 10 L76 10Z" fill="#666"/><path d="M16 40 L16 34 C16 30,20 28,24 28 L26 28 L26 25 L31 30 L26 35 L26 32 L22 32 C20 32,20 34,20 36 L20 40Z" fill="#666"/><path d="M66 25 L66 32 L72 32 L72 29 L77 34 L72 39 L72 36 L62 36 L62 25Z" fill="#666"/></svg>
<div style="left:2335px;top:1411px;width:197px;height:1px;background:#222;"></div>
<div class="t" style="left:2343px;top:1414px;font-size:13px;color:#ddd;">Split</div>
<div style="left:2335px;top:1435px;width:197px;height:1px;background:#222;"></div>
<div class="b" style="left:116px;top:1350px;width:91px;height:20px;background:#333333;border:1px solid #1e1e1e;color:#d0d0d0;font-size:13px;justify-content:flex-start;padding-left:3px;">Import</div>
<div class="t" style="left:215px;top:1350px;font-size:13px;color:#d0d0d0;">MidValue 0</div>
<div style="left:211px;top:1367px;width:92px;height:1px;background:#4a4a4a;"></div>
<div style="left:212px;top:1364px;width:14px;height:7px;border-radius:4px;background:#f8952a"></div>
<div class="b" style="left:308px;top:1350px;width:92px;height:20px;background:#2d2d2d;border:1px solid #262626;color:#d0d0d0;font-size:13px;justify-content:flex-start;padding-left:3px;">Surface</div>
<div class="b" style="left:430px;top:1350px;width:187px;height:20px;background:#f8952a;border:1px solid #160600;color:#2a0f00;font-size:13px;justify-content:flex-start;padding-left:3px;box-shadow:0 0 0 0.6px #160600;">Auto Mask FiberMesh</div>
<div class="t" style="left:625px;top:1350px;font-size:13px;color:#6a6a6a;">LazyStep</div>
<div style="left:623px;top:1367px;width:86px;height:1px;background:#4a4a4a;"></div>
<div style="left:634px;top:1364px;width:14px;height:7px;border-radius:4px;background:#7a4c1c"></div>
<div class="t" style="left:721px;top:1350px;font-size:13px;color:#6a6a6a;">LazyRadius</div>
<div style="left:721px;top:1367px;width:86px;height:1px;background:#4a4a4a;"></div>
<div style="left:746px;top:1364px;width:14px;height:7px;border-radius:4px;background:#7a4c1c"></div>
<div class="b" style="left:814px;top:1350px;width:91px;height:20px;background:#2d2d2d;border:1px solid #262626;color:#5c5c5c;font-size:13px;justify-content:flex-start;padding-left:3px;">Split Hidden</div>
<div class="b" style="left:910px;top:1350px;width:90px;height:20px;background:#2d2d2d;border:1px solid #262626;color:#5c5c5c;font-size:13px;justify-content:flex-start;padding-left:3px;">MergeDown</div>
<div class="b" style="left:1005px;top:1350px;width:44px;height:20px;background:#2d2d2d;border:1px solid #262626;color:#5c5c5c;font-size:13px;justify-content:flex-start;padding-left:3px;">Uv</div>
<div class="b" style="left:116px;top:1392px;width:91px;height:20px;background:#2d2d2d;border:1px solid #262626;color:#5c5c5c;font-size:13px;justify-content:flex-start;padding-left:3px;">ProjectAll</div>
<div class="t" style="left:215px;top:1392px;font-size:13px;color:#d0d0d0;">Dist 0.02</div>
<div style="left:211px;top:1409px;width:92px;height:1px;background:#4a4a4a;"></div>
<div style="left:241px;top:1406px;width:14px;height:7px;border-radius:4px;background:#f8952a"></div>
<div class="b" style="left:331px;top:1392px;width:93px;height:20px;background:#2d2d2d;border:1px solid #262626;color:#d0d0d0;font-size:13px;justify-content:flex-start;padding-left:3px;">BackfaceMask</div>
<div class="b" style="left:488px;top:1392px;width:92px;height:20px;background:#2d2d2d;border:1px solid #262626;color:#5c5c5c;font-size:13px;justify-content:flex-start;padding-left:3px;">Delete</div>
<div class="t" style="left:623px;top:1392px;font-size:13px;color:#d0d0d0;">Split Screen 0</div>
<div style="left:620px;top:1409px;width:91px;height:1px;background:#4a4a4a;"></div>
<div style="left:620px;top:1406px;width:14px;height:7px;border-radius:4px;background:#f8952a"></div>
<div class="b" style="left:811px;top:1392px;width:92px;height:20px;background:#2d2d2d;border:1px solid #262626;color:#5c5c5c;font-size:13px;justify-content:flex-start;padding-left:3px;">MergeVisible</div>
<div class="b" style="left:907px;top:1392px;width:140px;height:20px;background:#2d2d2d;border:1px solid #262626;color:#d0d0d0;font-size:13px;justify-content:flex-start;padding-left:3px;">Colorize</div>
<div class="b" style="left:116px;top:1416px;width:91px;height:20px;background:#f8952a;border:1px solid #160600;color:#2a0f00;font-size:13px;justify-content:flex-start;padding-left:3px;box-shadow:0 0 0 0.6px #160600;">Geometry</div>
<div class="b" style="left:212px;top:1416px;width:92px;height:20px;background:#f8952a;border:1px solid #160600;color:#2a0f00;font-size:13px;justify-content:flex-start;padding-left:3px;box-shadow:0 0 0 0.6px #160600;">Color</div>
<div class="t" style="left:335px;top:1416px;font-size:13px;color:#d0d0d0;">Min Connected F</div>
<div style="left:335px;top:1433px;width:89px;height:1px;background:#4a4a4a;"></div>
<div style="left:342px;top:1430px;width:14px;height:7px;border-radius:4px;background:#f8952a"></div>
<div class="b" style="left:811px;top:1416px;width:92px;height:20px;background:#333333;border:1px solid #1e1e1e;color:#d0d0d0;font-size:13px;justify-content:flex-start;padding-left:3px;">StoreMT</div>
<div class="b" style="left:907px;top:1416px;width:91px;height:20px;background:#2d2d2d;border:1px solid #262626;color:#5c5c5c;font-size:13px;justify-content:flex-start;padding-left:3px;">DelMT</div>
<div class="t" style="left:1091px;top:1350px;font-size:13px;color:#6a6a6a;">SDiv</div>
<div style="left:1090px;top:1365px;width:90px;height:5px;background:#7a4c1c;border-radius:2px;"></div>
<div style="left:1090px;top:1379px;width:50px;height:6px;background:repeating-linear-gradient(45deg,#4a4a4a 0 1px,#2a2a2a 1px 2px)"></div>
<div style="left:1167px;top:1379px;width:51px;height:6px;background:repeating-linear-gradient(45deg,#4a4a4a 0 1px,#2a2a2a 1px 2px)"></div>
<svg style="left:1142px;top:1377px" width="24" height="10"><path d="M1 9 L6 2 L11 9Z M13 2 L23 2 L18 9Z" fill="#bbb"/></svg>
<div class="b" style="left:1184px;top:1352px;width:91px;height:20px;background:#2d2d2d;border:1px solid #262626;color:#5c5c5c;font-size:13px;justify-content:flex-start;padding-left:3px;">Del Lower</div>
<div class="b" style="left:1280px;top:1352px;width:92px;height:20px;background:#2d2d2d;border:1px solid #262626;color:#5c5c5c;font-size:13px;justify-content:flex-start;padding-left:3px;">Del Higher</div>
<div class="b" style="left:1406px;top:1350px;width:188px;height:20px;background:#2d2d2d;border:1px solid #262626;color:#d0d0d0;font-size:13px;justify-content:flex-start;padding-left:3px;">Mirror And Weld</div>
<div class="b" style="left:1597px;top:1350px;width:92px;height:20px;background:#2d2d2d;border:1px solid #262626;color:#d0d0d0;font-size:13px;justify-content:flex-start;padding-left:3px;">Del Hidden</div>
<div class="b" style="left:1693px;top:1350px;width:92px;height:20px;background:#2d2d2d;border:1px solid #262626;color:#d0d0d0;font-size:13px;justify-content:flex-start;padding-left:3px;">Close Holes</div>
<div class="t" style="left:1793px;top:1350px;font-size:13px;color:#d0d0d0;">Polish By Features</div>
<div style="left:1790px;top:1367px;width:182px;height:1px;background:#4a4a4a;"></div>
<div style="left:1790px;top:1364px;width:14px;height:7px;border-radius:4px;background:#f8952a"></div>
<div class="t" style="left:1985px;top:1350px;font-size:13px;color:#d0d0d0;">Polish By Groups</div>
<div style="left:1982px;top:1367px;width:182px;height:1px;background:#4a4a4a;"></div>
<div style="left:1982px;top:1364px;width:14px;height:7px;border-radius:4px;background:#f8952a"></div>
<div style="left:1969px;top:1352px;width:6px;height:6px;border-radius:50%;background:#ddd"></div>
<div style="left:2161px;top:1352px;width:6px;height:6px;border-radius:50%;background:#ddd"></div>
<div class="b" style="left:1091px;top:1391px;width:92px;height:21px;background:#2d2d2d;border:1px solid #262626;color:#5c5c5c;font-size:13px;justify-content:flex-start;padding-left:3px;">Morph UV</div>
<div class="b" style="left:1186px;top:1391px;width:93px;height:21px;background:#2d2d2d;border:1px solid #262626;color:#5c5c5c;font-size:13px;justify-content:flex-start;padding-left:3px;">Delete</div>
<div class="b" style="left:1091px;top:1415px;width:92px;height:21px;background:#2d2d2d;border:1px solid #262626;color:#d0d0d0;font-size:13px;justify-content:flex-start;padding-left:3px;">Double</div>
<div class="b" style="left:1186px;top:1415px;width:93px;height:21px;background:#2d2d2d;border:1px solid #262626;color:#d0d0d0;font-size:13px;justify-content:flex-start;padding-left:3px;">Flip</div>
<div class="b" style="left:1283px;top:1391px;width:92px;height:45px;background:#f8952a;border:1px solid #160600;color:#2a0f00;font-size:13px;justify-content:flex-start;padding-left:3px;box-shadow:0 0 0 0.6px #160600;">DynaMesh</div>
<div class="b" style="left:1380px;top:1391px;width:43px;height:21px;background:#2d2d2d;border:1px solid #262626;color:#d0d0d0;font-size:13px;justify-content:flex-start;padding-left:2px;">Groups</div>
<div class="b" style="left:1426px;top:1391px;width:44px;height:21px;background:#2d2d2d;border:1px solid #262626;color:#d0d0d0;font-size:13px;justify-content:flex-start;padding-left:2px;">Polish</div>
<div class="t" style="left:1382px;top:1416px;font-size:13px;color:#d0d0d0;">Resolution 128</div>
<div style="left:1382px;top:1434px;width:133px;height:1px;background:#4a4a4a;"></div>
<div style="left:1399px;top:1431px;width:14px;height:7px;border-radius:4px;background:#f8952a"></div>
<div style="left:1510px;top:1418px;width:6px;height:6px;border-radius:50%;background:#ddd"></div>
<div class="b" style="left:1571px;top:1391px;width:92px;height:45px;background:#2d2d2d;border:1px solid #262626;color:#d0d0d0;font-size:13px;justify-content:flex-start;padding-left:3px;">ZRemesher</div>
<div class="b" style="left:1700px;top:1391px;width:188px;height:21px;background:#2d2d2d;border:1px solid #262626;color:#d0d0d0;font-size:13px;justify-content:flex-start;padding-left:3px;">Unify</div>
<div class="b" style="left:1700px;top:1415px;width:188px;height:21px;background:#2d2d2d;border:1px solid #262626;color:#d0d0d0;font-size:13px;justify-content:flex-start;padding-left:3px;">Mirror</div>
<div class="t" style="left:1896px;top:1392px;font-size:13px;color:#d0d0d0;">Inflate</div>
<div style="left:1893px;top:1409px;width:187px;height:1px;background:#4a4a4a;"></div>
<div style="left:1979px;top:1406px;width:14px;height:7px;border-radius:4px;background:#f8952a"></div>
<div class="b" style="left:1893px;top:1415px;width:188px;height:21px;background:#2d2d2d;border:1px solid #262626;color:#d0d0d0;font-size:13px;justify-content:flex-start;padding-left:3px;">Smart ReSym</div>
<div class="b" style="left:2099px;top:1391px;width:92px;height:21px;background:#2d2d2d;border:1px solid #262626;color:#d0d0d0;font-size:13px;justify-content:flex-start;padding-left:3px;">Auto Groups</div>
<svg style="left:1572px;top:1352px" width="24" height="10"><g fill="#ccc"><rect x="1" y="1" width="2" height="2"/><rect x="5" y="1" width="2" height="2"/><rect x="3" y="3" width="2" height="2"/><rect x="1" y="5" width="2" height="2"/><rect x="5" y="5" width="2" height="2"/></g><path d="M10 1 L12 4 L14 1 M12 4 L12 8" stroke="#999" fill="none"/><path d="M17 1 L22 1 L17 8 L22 8" stroke="#999" fill="none"/></svg>
<svg style="left:1865px;top:1393px" width="24" height="10"><g fill="#ccc"><rect x="1" y="1" width="2" height="2"/><rect x="5" y="1" width="2" height="2"/><rect x="3" y="3" width="2" height="2"/><rect x="1" y="5" width="2" height="2"/><rect x="5" y="5" width="2" height="2"/></g><path d="M10 1 L12 4 L14 1 M12 4 L12 8" stroke="#999" fill="none"/><path d="M17 1 L22 1 L17 8 L22 8" stroke="#999" fill="none"/></svg>
<svg style="left:1865px;top:1417px" width="24" height="10"><g fill="#ccc"><rect x="1" y="1" width="2" height="2"/><rect x="5" y="1" width="2" height="2"/><rect x="3" y="3" width="2" height="2"/><rect x="1" y="5" width="2" height="2"/><rect x="5" y="5" width="2" height="2"/></g><path d="M10 1 L12 4 L14 1 M12 4 L12 8" stroke="#999" fill="none"/><path d="M17 1 L22 1 L17 8 L22 8" stroke="#999" fill="none"/></svg>
<svg style="left:2058px;top:1393px" width="24" height="10"><g fill="#ccc"><rect x="1" y="1" width="2" height="2"/><rect x="5" y="1" width="2" height="2"/><rect x="3" y="3" width="2" height="2"/><rect x="1" y="5" width="2" height="2"/><rect x="5" y="5" width="2" height="2"/></g><path d="M10 1 L12 4 L14 1 M12 4 L12 8" stroke="#999" fill="none"/><path d="M17 1 L22 1 L17 8 L22 8" stroke="#999" fill="none"/></svg>
<svg style="left:2058px;top:1417px" width="24" height="10"><g fill="#ccc"><rect x="1" y="1" width="2" height="2"/><rect x="5" y="1" width="2" height="2"/><rect x="3" y="3" width="2" height="2"/><rect x="1" y="5" width="2" height="2"/><rect x="5" y="5" width="2" height="2"/></g><path d="M10 1 L12 4 L14 1 M12 4 L12 8" stroke="#999" fill="none"/><path d="M17 1 L22 1 L17 8 L22 8" stroke="#999" fill="none"/></svg>
</body></html>
